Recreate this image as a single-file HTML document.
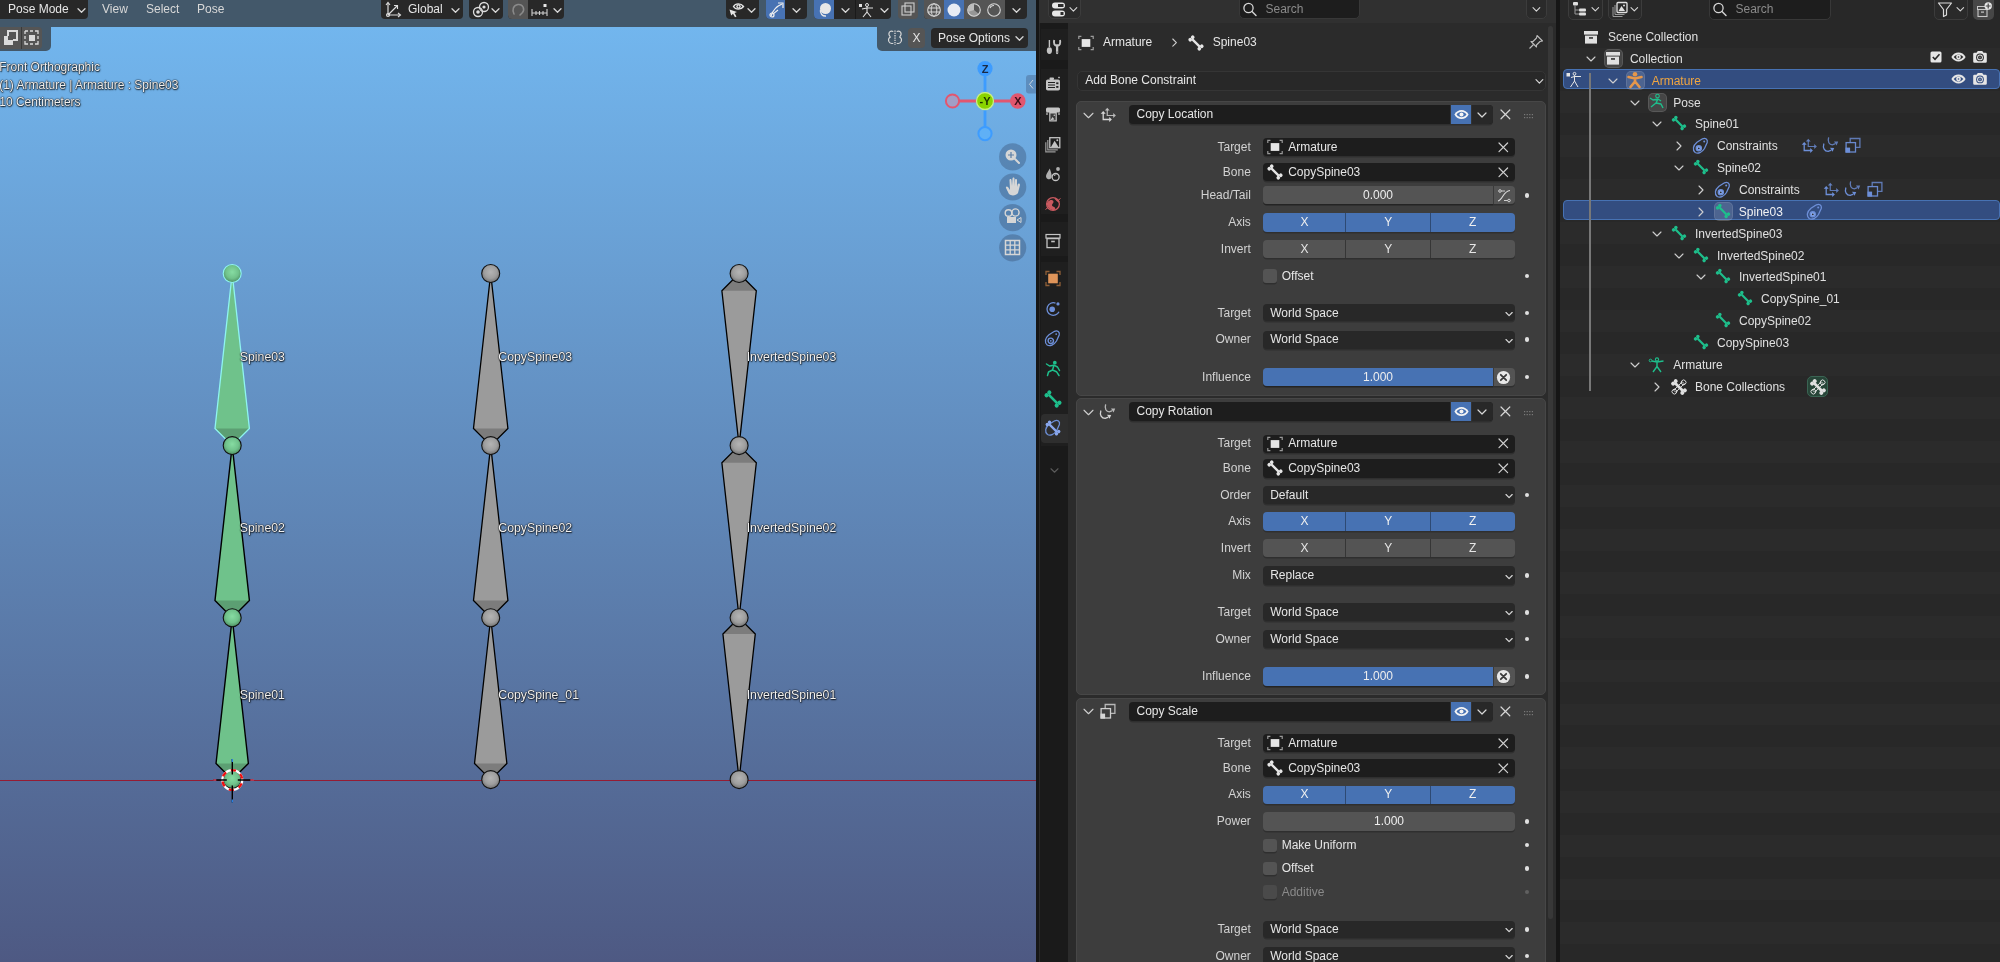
<!DOCTYPE html><html><head><meta charset="utf-8"><style>
html,body{margin:0;padding:0;width:2000px;height:962px;overflow:hidden;background:#161616;font-family:"Liberation Sans", sans-serif;}
div{box-sizing:border-box;}
body>div{will-change:transform;}
</style></head><body>
<div style="position:absolute;left:0;top:0;width:1036px;height:962px;background:linear-gradient(180deg,#72b6ee 27px,#4f5d87 925px,#4e5983 962px);overflow:hidden">
<div style="position:absolute;left:0px;top:0px;width:1036px;height:27px;background:rgba(47,47,47,0.69);border-radius:0px;"></div>
<div style="position:absolute;left:0px;top:27px;width:51px;height:23.8px;background:rgba(47,47,47,0.69);border-radius:0px;border-bottom-right-radius:5px"></div>
<div style="position:absolute;left:877px;top:27px;width:159px;height:23.8px;background:rgba(47,47,47,0.69);border-radius:0px;border-bottom-left-radius:5px"></div>
<div style="position:absolute;left:-5px;top:-5px;width:93px;height:24px;background:#282828;border-radius:4px;"></div>
<div style="position:absolute;left:8px;top:1px;height:16px;line-height:16px;font-size:12px;color:#e6e6e6;white-space:nowrap;">Pose Mode</div>
<svg style="position:absolute;left:76.5px;top:6.5px;overflow:visible" width="9.0" height="7.0" viewBox="0 0 9.0 7.0" ><path d="M1 1.75 L4.5 5.25 L8.0 1.75" fill="none" stroke="#d6d6d6" stroke-width="1.3" stroke-linecap="round" stroke-linejoin="round"/></svg>
<div style="position:absolute;left:102px;top:1px;height:16px;line-height:16px;font-size:12px;color:#d8d8d8;white-space:nowrap;">View</div>
<div style="position:absolute;left:146px;top:1px;height:16px;line-height:16px;font-size:12px;color:#d8d8d8;white-space:nowrap;">Select</div>
<div style="position:absolute;left:197px;top:1px;height:16px;line-height:16px;font-size:12px;color:#d8d8d8;white-space:nowrap;">Pose</div>
<div style="position:absolute;left:381px;top:-5px;width:82px;height:24px;background:#282828;border-radius:4px;"></div>
<svg style="position:absolute;left:385px;top:1px;overflow:visible" width="16" height="16" viewBox="0 0 16 16" ><path d="M3 2 V14 H15 M3 14 L12 5" fill="none" stroke="#dcdcdc" stroke-width="1.2"/><path d="M1 4 L3 1.5 L5 4 M13 12 L15.5 14 L13 16 M9 4.5 L12.5 4.5 L12.5 8" fill="none" stroke="#dcdcdc" stroke-width="1.1"/><circle cx="3" cy="14" r="1.5" fill="none" stroke="#dcdcdc" stroke-width="1.1"/></svg>
<div style="position:absolute;left:408px;top:1px;height:16px;line-height:16px;font-size:12px;color:#e6e6e6;white-space:nowrap;">Global</div>
<svg style="position:absolute;left:450.5px;top:6.5px;overflow:visible" width="9.0" height="7.0" viewBox="0 0 9.0 7.0" ><path d="M1 1.75 L4.5 5.25 L8.0 1.75" fill="none" stroke="#d6d6d6" stroke-width="1.3" stroke-linecap="round" stroke-linejoin="round"/></svg>
<div style="position:absolute;left:469px;top:-5px;width:34px;height:24px;background:#282828;border-radius:4px;"></div>
<svg style="position:absolute;left:472px;top:1px;overflow:visible" width="18" height="17" viewBox="0 0 18 17" ><circle cx="6" cy="11" r="4.5" fill="none" stroke="#dcdcdc" stroke-width="1.3"/><circle cx="6" cy="11" r="1.8" fill="#dcdcdc"/><circle cx="12" cy="6" r="4.5" fill="none" stroke="#dcdcdc" stroke-width="1.3"/><circle cx="12" cy="6" r="1.6" fill="#dcdcdc"/></svg>
<svg style="position:absolute;left:490.5px;top:6.5px;overflow:visible" width="9.0" height="7.0" viewBox="0 0 9.0 7.0" ><path d="M1 1.75 L4.5 5.25 L8.0 1.75" fill="none" stroke="#d6d6d6" stroke-width="1.3" stroke-linecap="round" stroke-linejoin="round"/></svg>
<div style="position:absolute;left:508px;top:-5px;width:56px;height:24px;background:#282828;border-radius:4px;"></div>
<div style="position:absolute;left:508px;top:-5px;width:20px;height:24px;background:#555555;border-radius:0px;border-top-left-radius:4px;border-bottom-left-radius:4px"></div>
<svg style="position:absolute;left:511px;top:2px;overflow:visible" width="15" height="15" viewBox="0 0 15 15" ><path d="M3 12 C1 8 2 3 7 2.5 C12 2 14 7 11.5 10.5 L9 13" fill="none" stroke="#8a8a8a" stroke-width="1.6" stroke-linecap="round"/></svg>
<svg style="position:absolute;left:531px;top:3px;overflow:visible" width="18" height="14" viewBox="0 0 18 14" ><path d="M1 6 V13 M16 6 V13 M1 10 H16 M5 8 V12 M8.5 8 V12 M12 8 V12" stroke="#cfcfcf" stroke-width="1.1"/><rect x="12.5" y="1" width="3" height="3" fill="#e6e6e6"/></svg>
<svg style="position:absolute;left:552.5px;top:6.5px;overflow:visible" width="9.0" height="7.0" viewBox="0 0 9.0 7.0" ><path d="M1 1.75 L4.5 5.25 L8.0 1.75" fill="none" stroke="#d6d6d6" stroke-width="1.3" stroke-linecap="round" stroke-linejoin="round"/></svg>
<div style="position:absolute;left:726px;top:-5px;width:33px;height:24px;background:#282828;border-radius:4px;"></div>
<svg style="position:absolute;left:728px;top:1px;overflow:visible" width="18" height="17" viewBox="0 0 18 17" ><path d="M1.5 8.5 L9 11 L6.5 12 L8.5 15.5 L7 16.3 L5 12.8 L3.2 14.5 Z" fill="#e6e6e6"/><path d="M5.5 5.5 C7.5 2 13 2 15.5 5.5 C13 9 7.5 9 5.5 5.5 Z" fill="none" stroke="#e6e6e6" stroke-width="1.4"/><circle cx="10.5" cy="5.5" r="2.2" fill="#e6e6e6"/><circle cx="10.5" cy="5.5" r="0.9" fill="#282828"/></svg>
<svg style="position:absolute;left:746.5px;top:6.5px;overflow:visible" width="9.0" height="7.0" viewBox="0 0 9.0 7.0" ><path d="M1 1.75 L4.5 5.25 L8.0 1.75" fill="none" stroke="#d6d6d6" stroke-width="1.3" stroke-linecap="round" stroke-linejoin="round"/></svg>
<div style="position:absolute;left:766px;top:-5px;width:41px;height:24px;background:#282828;border-radius:4px;"></div>
<div style="position:absolute;left:766px;top:-5px;width:19px;height:24px;background:#4772b3;border-radius:0px;border-top-left-radius:4px;border-bottom-left-radius:4px"></div>
<svg style="position:absolute;left:768px;top:1px;overflow:visible" width="16" height="17" viewBox="0 0 16 17" ><path d="M3 15 C5 9 9 5 14 3" fill="none" stroke="#f0f0f0" stroke-width="1.2"/><path d="M10 2 H15 V7" fill="none" stroke="#f0f0f0" stroke-width="1.2"/><circle cx="4" cy="14" r="2" fill="none" stroke="#f0f0f0" stroke-width="1.2"/><path d="M5 13 L10 9" stroke="#f0f0f0" stroke-width="1.1"/></svg>
<svg style="position:absolute;left:791.5px;top:6.5px;overflow:visible" width="9.0" height="7.0" viewBox="0 0 9.0 7.0" ><path d="M1 1.75 L4.5 5.25 L8.0 1.75" fill="none" stroke="#d6d6d6" stroke-width="1.3" stroke-linecap="round" stroke-linejoin="round"/></svg>
<div style="position:absolute;left:814px;top:-5px;width:77px;height:24px;background:#282828;border-radius:4px;"></div>
<div style="position:absolute;left:814px;top:-5px;width:20px;height:24px;background:#4772b3;border-radius:0px;border-top-left-radius:4px;border-bottom-left-radius:4px"></div>
<svg style="position:absolute;left:816px;top:1px;overflow:visible" width="16" height="17" viewBox="0 0 16 17" ><circle cx="9.5" cy="7.5" r="5.5" fill="#e8e8e8"/><path d="M4.5 9 A5 5 0 0 0 10 15" fill="none" stroke="#e8e8e8" stroke-width="1.4"/></svg>
<svg style="position:absolute;left:840.5px;top:6.5px;overflow:visible" width="9.0" height="7.0" viewBox="0 0 9.0 7.0" ><path d="M1 1.75 L4.5 5.25 L8.0 1.75" fill="none" stroke="#d6d6d6" stroke-width="1.3" stroke-linecap="round" stroke-linejoin="round"/></svg>
<div style="position:absolute;left:855px;top:-5px;width:1px;height:24px;background:#1a1a1a;border-radius:0px;"></div>
<svg style="position:absolute;left:858px;top:2px;overflow:visible" width="16" height="16" viewBox="0 0 16 16" ><rect x="1" y="2" width="3" height="3" fill="#e0e0e0"/><circle cx="9" cy="3" r="1.5" fill="none" stroke="#e0e0e0" stroke-width="1"/><path d="M9 4.5 V10 L5 15 M9 10 L13 15 M4 7 L9 6 L15 6" fill="none" stroke="#e0e0e0" stroke-width="1.1"/></svg>
<svg style="position:absolute;left:879.5px;top:6.5px;overflow:visible" width="9.0" height="7.0" viewBox="0 0 9.0 7.0" ><path d="M1 1.75 L4.5 5.25 L8.0 1.75" fill="none" stroke="#d6d6d6" stroke-width="1.3" stroke-linecap="round" stroke-linejoin="round"/></svg>
<div style="position:absolute;left:898px;top:-5px;width:20px;height:24px;background:#555555;border-radius:4px;"></div>
<svg style="position:absolute;left:900px;top:2px;overflow:visible" width="16" height="15" viewBox="0 0 16 15" ><rect x="2" y="4" width="9" height="9" fill="none" stroke="#cfcfcf" stroke-width="1.1"/><rect x="5" y="1" width="9" height="9" fill="none" stroke="#cfcfcf" stroke-width="1.1"/></svg>
<div style="position:absolute;left:924px;top:-5px;width:103px;height:24px;background:#282828;border-radius:4px;"></div>
<div style="position:absolute;left:924px;top:-5px;width:20px;height:24px;background:#555555;border-radius:0px;border-top-left-radius:4px;border-bottom-left-radius:4px"></div>
<div style="position:absolute;left:944px;top:-5px;width:20px;height:24px;background:#4772b3;border-radius:0px;"></div>
<div style="position:absolute;left:964px;top:-5px;width:20px;height:24px;background:#555555;border-radius:0px;"></div>
<div style="position:absolute;left:984px;top:-5px;width:21px;height:24px;background:#555555;border-radius:0px;"></div>
<svg style="position:absolute;left:926px;top:2px;overflow:visible" width="16" height="16" viewBox="0 0 16 16" ><circle cx="8" cy="8" r="6.3" fill="none" stroke="#d8d8d8" stroke-width="1.1"/><ellipse cx="8" cy="8" rx="2.8" ry="6.3" fill="none" stroke="#d8d8d8" stroke-width="1"/><path d="M1.7 6 H14.3 M1.7 10 H14.3" stroke="#d8d8d8" stroke-width="1"/></svg>
<svg style="position:absolute;left:946px;top:2px;overflow:visible" width="16" height="16" viewBox="0 0 16 16" ><circle cx="8" cy="8" r="6.5" fill="#e8ecf4"/></svg>
<svg style="position:absolute;left:966px;top:2px;overflow:visible" width="16" height="16" viewBox="0 0 16 16" ><circle cx="8" cy="8" r="6.3" fill="none" stroke="#d8d8d8" stroke-width="1.1"/><path d="M8 1.7 V8 L13 12 A6.3 6.3 0 0 1 2 10 Z" fill="#d8d8d8" opacity="0.5"/><path d="M8 1.7 A6.3 6.3 0 0 0 2 10 L8 8 Z" fill="#bdbdbd"/></svg>
<svg style="position:absolute;left:986px;top:2px;overflow:visible" width="16" height="16" viewBox="0 0 16 16" ><circle cx="8" cy="8" r="6.3" fill="none" stroke="#d8d8d8" stroke-width="1.1"/><path d="M4 6 A4 4 0 0 1 8 3.5" fill="none" stroke="#d8d8d8" stroke-width="1.1"/></svg>
<svg style="position:absolute;left:1011.5px;top:6.5px;overflow:visible" width="9.0" height="7.0" viewBox="0 0 9.0 7.0" ><path d="M1 1.75 L4.5 5.25 L8.0 1.75" fill="none" stroke="#d6d6d6" stroke-width="1.3" stroke-linecap="round" stroke-linejoin="round"/></svg>
<div style="position:absolute;left:-4px;top:27px;width:46px;height:22px;background:#555555;border-radius:4px;"></div>
<div style="position:absolute;left:21px;top:27px;width:1px;height:22px;background:#3a3a3a;border-radius:0px;"></div>
<svg style="position:absolute;left:2px;top:30px;overflow:visible" width="17" height="16" viewBox="0 0 17 16" ><rect x="2" y="6" width="9" height="9" fill="#dadada"/><rect x="6" y="1" width="9" height="9" fill="none" stroke="#dadada" stroke-width="2"/><rect x="6" y="6" width="5" height="4" fill="#555"/></svg>
<svg style="position:absolute;left:24px;top:30px;overflow:visible" width="16" height="16" viewBox="0 0 16 16" ><rect x="5" y="5" width="6" height="6" fill="#dadada"/><path d="M1 1 H4 M6 1 H9 M11 1 H14 V4 M14 6 V9 M14 11 V14 H11 M9 14 H6 M4 14 H1 V11 M1 9 V6 M1 4 V1" stroke="#dadada" stroke-width="1.3" fill="none"/></svg>
<svg style="position:absolute;left:886px;top:29px;overflow:visible" width="18" height="18" viewBox="0 0 18 18" ><path d="M7.3 2.5 C3.2 1.2 1.5 4.5 4.3 8 C1 10 2.5 15.5 7.3 14.2" fill="none" stroke="#d8d8d8" stroke-width="1.1"/><path d="M10.7 2.5 C14.8 1.2 16.5 4.5 13.7 8 C17 10 15.5 15.5 10.7 14.2" fill="none" stroke="#d8d8d8" stroke-width="1.1"/><path d="M9 1.5 V16" stroke="#d8d8d8" stroke-width="1.3" stroke-dasharray="1.3 1"/></svg>
<div style="position:absolute;left:908px;top:28px;width:17px;height:20px;background:#555555;border-radius:4px;"></div>
<div style="position:absolute;left:716.5px;width:400px;text-align:center;top:30px;height:16px;line-height:16px;font-size:12px;color:#e6e6e6;white-space:nowrap;">X</div>
<div style="position:absolute;left:931px;top:28px;width:97px;height:20px;background:#282828;border-radius:4px;"></div>
<div style="position:absolute;left:938px;top:29.5px;height:16px;line-height:16px;font-size:12px;color:#e6e6e6;white-space:nowrap;">Pose Options</div>
<svg style="position:absolute;left:1014.5px;top:34.5px;overflow:visible" width="9.0" height="7.0" viewBox="0 0 9.0 7.0" ><path d="M1 1.75 L4.5 5.25 L8.0 1.75" fill="none" stroke="#d6d6d6" stroke-width="1.3" stroke-linecap="round" stroke-linejoin="round"/></svg>
<div style="position:absolute;left:-0.8px;top:59px;height:16px;line-height:16px;font-size:12px;color:#f0f0f0;white-space:nowrap;text-shadow:0 0 1.5px rgba(0,0,0,.9),0 0 1px #000,0.5px 1px 1.5px rgba(0,0,0,.8)">Front Orthographic</div>
<div style="position:absolute;left:-0.8px;top:77px;height:16px;line-height:16px;font-size:12px;color:#f0f0f0;white-space:nowrap;text-shadow:0 0 1.5px rgba(0,0,0,.9),0 0 1px #000,0.5px 1px 1.5px rgba(0,0,0,.8)">(1) Armature | Armature : Spine03</div>
<div style="position:absolute;left:-0.8px;top:94.3px;height:16px;line-height:16px;font-size:12px;color:#f0f0f0;white-space:nowrap;text-shadow:0 0 1.5px rgba(0,0,0,.9),0 0 1px #000,0.5px 1px 1.5px rgba(0,0,0,.8)">10 Centimeters</div>
<svg style="position:absolute;left:0;top:0" width="1036" height="962"><line x1="985" y1="101" x2="985" y2="68.6" stroke="#3d9cff" stroke-width="2.8"/><line x1="985" y1="101" x2="985" y2="133.6" stroke="#3d9cff" stroke-width="2.8"/><line x1="985" y1="101" x2="1017.8" y2="101" stroke="#e2566f" stroke-width="2.8"/><line x1="985" y1="101" x2="952.5" y2="101" stroke="#e2566f" stroke-width="2.8"/><circle cx="985" cy="133.6" r="6.6" fill="#5fb0f6" stroke="#3d9cff" stroke-width="2"/><circle cx="952.5" cy="101" r="6.6" fill="#a19ec6" stroke="#e2566f" stroke-width="2"/><circle cx="985" cy="68.6" r="7.6" fill="#3d9cff"/><circle cx="1017.8" cy="101" r="7.8" fill="#e2566f"/><circle cx="985" cy="101" r="8.5" fill="#8ad400" stroke="#c9ef86" stroke-width="1.3"/><text x="985" y="72.8" font-size="11" font-family="Liberation Sans" font-weight="bold" fill="#1a2a44" text-anchor="middle">Z</text><text x="1017.8" y="105.2" font-size="11" font-family="Liberation Sans" font-weight="bold" fill="#3a0d18" text-anchor="middle">X</text><text x="985" y="105.2" font-size="11" font-family="Liberation Sans" font-weight="bold" fill="#1d3300" text-anchor="middle">-Y</text><circle cx="1012.7" cy="156.9" r="13.6" fill="rgba(50,70,100,0.35)"/><circle cx="1012.7" cy="187" r="13.6" fill="rgba(50,70,100,0.35)"/><circle cx="1012.7" cy="217.7" r="13.6" fill="rgba(50,70,100,0.35)"/><circle cx="1012.7" cy="247.8" r="13.6" fill="rgba(50,70,100,0.35)"/><circle cx="1011" cy="155" r="5.5" fill="#d6d6d6"/><path d="M1011 152 V158 M1008 155 H1014" stroke="#5a7ea6" stroke-width="1.2"/><path d="M1015 159 L1019 163" stroke="#d6d6d6" stroke-width="2" stroke-linecap="round"/><path d="M1006 188 L1009 194 C1011 196 1016 196 1018 193 L1020 185 C1020 183 1018 183 1017.5 185 L1017 187 L1017 180 C1017 178.5 1015 178.5 1015 180 L1014.5 186 L1014.5 178.5 C1014.5 177 1012.5 177 1012.5 178.5 L1012 186 L1011.5 180 C1011.5 178.5 1009.5 178.5 1009.5 180 L1010 190 L1008 187 C1007 186 1005.5 186.5 1006 188 Z" fill="#d6d6d6"/><circle cx="1008.5" cy="213" r="3.3" fill="none" stroke="#d6d6d6" stroke-width="1.4"/><circle cx="1015.5" cy="212.5" r="3.6" fill="none" stroke="#d6d6d6" stroke-width="1.4"/><rect x="1007" y="217" width="9" height="6" fill="#d6d6d6"/><path d="M1017 220 L1021 217.5 V222.5 Z" fill="none" stroke="#d6d6d6" stroke-width="1"/><rect x="1005.5" y="240.5" width="14" height="14" fill="none" stroke="#d6d6d6" stroke-width="1.5"/><path d="M1010.2 240.5 V254.5 M1014.8 240.5 V254.5 M1005.5 245.2 H1019.5 M1005.5 249.8 H1019.5" stroke="#d6d6d6" stroke-width="1.3"/><rect x="1026" y="75" width="14" height="18.5" rx="3" fill="rgba(70,100,140,0.45)"/><path d="M1033 80 L1029.5 84.3 L1033 88.5" fill="none" stroke="#c8d4e0" stroke-width="1"/></svg>
<div style="position:absolute;left:0px;top:780px;width:1036px;height:1px;background:#951c33;border-radius:0px;"></div>
<svg style="position:absolute;left:0;top:0" width="1036" height="962"><defs><radialGradient id="jg" cx="50%" cy="42%" r="58%"><stop offset="0" stop-color="#86dca2"/><stop offset="0.6" stop-color="#70c28b"/><stop offset="1" stop-color="#4d8f63"/></radialGradient><radialGradient id="jy" cx="50%" cy="42%" r="58%"><stop offset="0" stop-color="#b4b4b4"/><stop offset="0.6" stop-color="#9e9e9e"/><stop offset="1" stop-color="#707070"/></radialGradient></defs><path d="M232.2 779.6 L216.01999999999998 763.4200000000001 L232.2 617.8 L248.38 763.4200000000001 Z" fill="#6fc28b"/><path d="M232.2 779.6 L216.01999999999998 763.4200000000001 L248.38 763.4200000000001 Z" fill="#5c9f73"/><path d="M232.2 779.6 L216.01999999999998 763.4200000000001 L232.2 617.8 L248.38 763.4200000000001 Z" fill="none" stroke="#000" stroke-width="1.4" stroke-linejoin="miter"/><path d="M232.2 617.8 L214.98 600.5799999999999 L232.2 445.6 L249.42 600.5799999999999 Z" fill="#6fc28b"/><path d="M232.2 617.8 L214.98 600.5799999999999 L249.42 600.5799999999999 Z" fill="#5c9f73"/><path d="M232.2 617.8 L214.98 600.5799999999999 L232.2 445.6 L249.42 600.5799999999999 Z" fill="none" stroke="#000" stroke-width="1.4" stroke-linejoin="miter"/><path d="M232.2 445.6 L214.98999999999998 428.39000000000004 L232.2 273.5 L249.41 428.39000000000004 Z" fill="#6fc28b"/><path d="M232.2 445.6 L214.98999999999998 428.39000000000004 L249.41 428.39000000000004 Z" fill="#5c9f73"/><path d="M232.2 445.6 L214.98999999999998 428.39000000000004 L232.2 273.5 L249.41 428.39000000000004 Z" fill="none" stroke="#8ff4f0" stroke-width="1.3" stroke-linejoin="miter"/><circle cx="232.2" cy="779.6" r="9" fill="url(#jg)" stroke="#111" stroke-width="1.1"/><circle cx="232.2" cy="617.8" r="9" fill="url(#jg)" stroke="#111" stroke-width="1.1"/><circle cx="232.2" cy="445.6" r="9" fill="url(#jg)" stroke="#111" stroke-width="1.1"/><circle cx="232.2" cy="273.5" r="9" fill="url(#jg)" stroke="#8ff4f0" stroke-width="1.1"/><path d="M490.7 779.6 L474.52 763.4200000000001 L490.7 617.8 L506.88 763.4200000000001 Z" fill="#9b9b9b"/><path d="M490.7 779.6 L474.52 763.4200000000001 L506.88 763.4200000000001 Z" fill="#7c7c7c"/><path d="M490.7 779.6 L474.52 763.4200000000001 L490.7 617.8 L506.88 763.4200000000001 Z" fill="none" stroke="#000" stroke-width="1.3" stroke-linejoin="miter"/><path d="M490.7 617.8 L473.48 600.5799999999999 L490.7 445.6 L507.91999999999996 600.5799999999999 Z" fill="#9b9b9b"/><path d="M490.7 617.8 L473.48 600.5799999999999 L507.91999999999996 600.5799999999999 Z" fill="#7c7c7c"/><path d="M490.7 617.8 L473.48 600.5799999999999 L490.7 445.6 L507.91999999999996 600.5799999999999 Z" fill="none" stroke="#000" stroke-width="1.3" stroke-linejoin="miter"/><path d="M490.7 445.6 L473.49 428.39000000000004 L490.7 273.5 L507.90999999999997 428.39000000000004 Z" fill="#9b9b9b"/><path d="M490.7 445.6 L473.49 428.39000000000004 L507.90999999999997 428.39000000000004 Z" fill="#7c7c7c"/><path d="M490.7 445.6 L473.49 428.39000000000004 L490.7 273.5 L507.90999999999997 428.39000000000004 Z" fill="none" stroke="#000" stroke-width="1.3" stroke-linejoin="miter"/><circle cx="490.7" cy="273.5" r="9" fill="url(#jy)" stroke="#111" stroke-width="1.1"/><circle cx="490.7" cy="445.6" r="9" fill="url(#jy)" stroke="#111" stroke-width="1.1"/><circle cx="490.7" cy="617.8" r="9" fill="url(#jy)" stroke="#111" stroke-width="1.1"/><circle cx="490.7" cy="779.6" r="9" fill="url(#jy)" stroke="#111" stroke-width="1.1"/><path d="M739.1 273.5 L721.89 290.71 L739.1 445.6 L756.3100000000001 290.71 Z" fill="#9b9b9b"/><path d="M739.1 273.5 L721.89 290.71 L756.3100000000001 290.71 Z" fill="#7c7c7c"/><path d="M739.1 273.5 L721.89 290.71 L739.1 445.6 L756.3100000000001 290.71 Z" fill="none" stroke="#000" stroke-width="1.3" stroke-linejoin="miter"/><path d="M739.1 445.6 L721.88 462.82 L739.1 617.8 L756.32 462.82 Z" fill="#9b9b9b"/><path d="M739.1 445.6 L721.88 462.82 L756.32 462.82 Z" fill="#7c7c7c"/><path d="M739.1 445.6 L721.88 462.82 L739.1 617.8 L756.32 462.82 Z" fill="none" stroke="#000" stroke-width="1.3" stroke-linejoin="miter"/><path d="M739.1 617.8 L722.9200000000001 633.98 L739.1 779.6 L755.28 633.98 Z" fill="#9b9b9b"/><path d="M739.1 617.8 L722.9200000000001 633.98 L755.28 633.98 Z" fill="#7c7c7c"/><path d="M739.1 617.8 L722.9200000000001 633.98 L739.1 779.6 L755.28 633.98 Z" fill="none" stroke="#000" stroke-width="1.3" stroke-linejoin="miter"/><circle cx="739.1" cy="273.5" r="9" fill="url(#jy)" stroke="#111" stroke-width="1.1"/><circle cx="739.1" cy="445.6" r="9" fill="url(#jy)" stroke="#111" stroke-width="1.1"/><circle cx="739.1" cy="617.8" r="9" fill="url(#jy)" stroke="#111" stroke-width="1.1"/><circle cx="739.1" cy="779.6" r="9" fill="url(#jy)" stroke="#111" stroke-width="1.1"/><circle cx="232.3" cy="780" r="9.9" fill="none" stroke="#fff" stroke-width="2.3"/><circle cx="232.3" cy="780" r="9.9" fill="none" stroke="#f01010" stroke-width="2.3" stroke-dasharray="5.18 5.18" transform="rotate(20 232.3 780)"/><path d="M232.3 759 V774.5 M232.3 785.5 V802.5 M213.3 780 H226.8 M237.8 780 H253.3" stroke="#000" stroke-width="1.4"/><path d="M232.3 759 V762 M232.3 799.5 V802.5" stroke="#2a80e0" stroke-width="1.4"/><path d="M213.3 780 H216.3 M250.3 780 H253.8" stroke="#e04a6a" stroke-width="1.6"/></svg>
<div style="position:absolute;left:239.79999999999998px;top:349.2px;height:16px;line-height:16px;font-size:12.3px;color:#f2f2f2;white-space:nowrap;text-shadow:0 0 1.5px rgba(0,0,0,.9),0 0 1px #000,0.5px 1px 1.5px rgba(0,0,0,.8)">Spine03</div>
<div style="position:absolute;left:239.79999999999998px;top:520.3px;height:16px;line-height:16px;font-size:12.3px;color:#f2f2f2;white-space:nowrap;text-shadow:0 0 1.5px rgba(0,0,0,.9),0 0 1px #000,0.5px 1px 1.5px rgba(0,0,0,.8)">Spine02</div>
<div style="position:absolute;left:239.79999999999998px;top:687.0999999999999px;height:16px;line-height:16px;font-size:12.3px;color:#f2f2f2;white-space:nowrap;text-shadow:0 0 1.5px rgba(0,0,0,.9),0 0 1px #000,0.5px 1px 1.5px rgba(0,0,0,.8)">Spine01</div>
<div style="position:absolute;left:498.3px;top:349.2px;height:16px;line-height:16px;font-size:12.3px;color:#f2f2f2;white-space:nowrap;text-shadow:0 0 1.5px rgba(0,0,0,.9),0 0 1px #000,0.5px 1px 1.5px rgba(0,0,0,.8)">CopySpine03</div>
<div style="position:absolute;left:498.3px;top:520.3px;height:16px;line-height:16px;font-size:12.3px;color:#f2f2f2;white-space:nowrap;text-shadow:0 0 1.5px rgba(0,0,0,.9),0 0 1px #000,0.5px 1px 1.5px rgba(0,0,0,.8)">CopySpine02</div>
<div style="position:absolute;left:498.3px;top:687.0999999999999px;height:16px;line-height:16px;font-size:12.3px;color:#f2f2f2;white-space:nowrap;text-shadow:0 0 1.5px rgba(0,0,0,.9),0 0 1px #000,0.5px 1px 1.5px rgba(0,0,0,.8)">CopySpine_01</div>
<div style="position:absolute;left:746.7px;top:349.2px;height:16px;line-height:16px;font-size:12.3px;color:#f2f2f2;white-space:nowrap;text-shadow:0 0 1.5px rgba(0,0,0,.9),0 0 1px #000,0.5px 1px 1.5px rgba(0,0,0,.8)">InvertedSpine03</div>
<div style="position:absolute;left:746.7px;top:520.3px;height:16px;line-height:16px;font-size:12.3px;color:#f2f2f2;white-space:nowrap;text-shadow:0 0 1.5px rgba(0,0,0,.9),0 0 1px #000,0.5px 1px 1.5px rgba(0,0,0,.8)">InvertedSpine02</div>
<div style="position:absolute;left:746.7px;top:687.0999999999999px;height:16px;line-height:16px;font-size:12.3px;color:#f2f2f2;white-space:nowrap;text-shadow:0 0 1.5px rgba(0,0,0,.9),0 0 1px #000,0.5px 1px 1.5px rgba(0,0,0,.8)">InvertedSpine01</div>
</div>
<div style="position:absolute;left:1039px;top:0;width:517px;height:962px;overflow:hidden">
<div style="position:absolute;left:-1039px;top:0;width:2000px;height:962px">
<div style="position:absolute;left:1039px;top:0px;width:516.7px;height:962px;background:#2b2b2b;border-radius:0px;"></div>
<div style="position:absolute;left:1039px;top:0px;width:516.7px;height:23px;background:#303030;border-radius:0px;"></div>
<div style="position:absolute;left:1048px;top:-5px;width:33px;height:24px;background:#2a2a2a;border-radius:5px;border:1px solid #3c3c3c"></div>
<svg style="position:absolute;left:1051px;top:1px;overflow:visible" width="18" height="17" viewBox="0 0 18 17" ><rect x="1" y="1.5" width="13" height="6" rx="3" fill="#e6e6e6"/><rect x="7" y="3" width="5.5" height="3" fill="#2a2a2a"/><rect x="1" y="9.5" width="13" height="6" rx="3" fill="#e6e6e6"/><rect x="9.5" y="11" width="3" height="3" fill="#2a2a2a"/></svg>
<svg style="position:absolute;left:1068.6px;top:6.1px;overflow:visible" width="8.8" height="6.8" viewBox="0 0 8.8 6.8" ><path d="M1 1.7 L4.4 5.1 L7.8 1.7" fill="none" stroke="#d6d6d6" stroke-width="1.1" stroke-linecap="round" stroke-linejoin="round"/></svg>
<div style="position:absolute;left:1238.5px;top:-5px;width:121.5px;height:24px;background:#1d1d1d;border-radius:5px;border:1px solid #383838"></div>
<svg style="position:absolute;left:1242px;top:1px;overflow:visible" width="16" height="17" viewBox="0 0 16 17" ><circle cx="6.5" cy="7" r="4.6" fill="none" stroke="#d6d6d6" stroke-width="1.3"/><path d="M10 10.5 L14 14.5" stroke="#d6d6d6" stroke-width="1.4" stroke-linecap="round"/></svg>
<div style="position:absolute;left:1265.5px;top:1px;height:16px;line-height:16px;font-size:12px;color:#8a8a8a;white-space:nowrap;">Search</div>
<div style="position:absolute;left:1526px;top:-5px;width:21px;height:24px;background:#2a2a2a;border-radius:5px;border:1px solid #3c3c3c"></div>
<svg style="position:absolute;left:1532.1px;top:6.1px;overflow:visible" width="8.8" height="6.8" viewBox="0 0 8.8 6.8" ><path d="M1 1.7 L4.4 5.1 L7.8 1.7" fill="none" stroke="#d6d6d6" stroke-width="1.1" stroke-linecap="round" stroke-linejoin="round"/></svg>
<div style="position:absolute;left:1040px;top:23px;width:28px;height:939px;background:#1a1a1a;border-radius:0px;"></div>
<div style="position:absolute;left:1041px;top:29px;width:27px;height:31px;background:#1f1f1f;border-radius:0px;"></div>
<div style="position:absolute;left:1041px;top:68.5px;width:27px;height:145.5px;background:#1f1f1f;border-radius:0px;"></div>
<div style="position:absolute;left:1041px;top:222px;width:27px;height:34px;background:#1f1f1f;border-radius:0px;"></div>
<div style="position:absolute;left:1041px;top:262px;width:27px;height:184px;background:#1f1f1f;border-radius:0px;"></div>
<div style="position:absolute;left:1041px;top:414px;width:27px;height:29px;background:#2e2e2e;border-radius:4px;border-top-right-radius:0;border-bottom-right-radius:0"></div>
<svg style="position:absolute;left:0;top:0;overflow:visible" width="2000" height="962"><g transform="translate(1053,47)"><path d="M-3.6 -7 V0" stroke="#c4c4c4" stroke-width="1.4"/><ellipse cx="-3.6" cy="3.6" rx="2.6" ry="3.4" fill="#c4c4c4"/><path d="M4.1 -1.5 V6" stroke="#c4c4c4" stroke-width="2.3" stroke-linecap="round"/><path d="M1.2 -7 C0.3 -3.5 1.6 -1.2 4.1 -1.2 C6.6 -1.2 7.9 -3.5 7 -7" fill="none" stroke="#c4c4c4" stroke-width="1.9"/><circle cx="4.1" cy="5" r="0.6" fill="#1f1f1f"/></g><g transform="translate(1053,84)"><rect x="-7" y="-4.5" width="14" height="11" rx="1.8" fill="#c4c4c4"/><rect x="-3.5" y="-6.6" width="4.5" height="2.5" rx="0.8" fill="#c4c4c4"/><rect x="5.2" y="-7.2" width="1.6" height="1.4" fill="#c4c4c4"/><path d="M-5 -1.5 H2 M-5 1 H2 M-5 3.5 H2" stroke="#1f1f1f" stroke-width="1"/><rect x="3.2" y="-1.6" width="2.2" height="1.8" fill="#1f1f1f"/><rect x="3.2" y="2" width="2.2" height="1.8" fill="#1f1f1f"/></g><g transform="translate(1053,114.5)"><rect x="-7" y="-7" width="14" height="5" rx="1.5" fill="#c4c4c4"/><path d="M-6 -2 V0.5 M6 -2 V0.5" stroke="#c4c4c4" stroke-width="1.2"/><rect x="-3.8" y="-2.5" width="7.6" height="9.5" fill="#c4c4c4"/><rect x="-2.6" y="-1" width="5.2" height="6.8" fill="#3a3a3a"/><path d="M-2.6 5.8 L-0.5 2.5 L1.5 5 Z" fill="#c4c4c4"/><circle cx="1.3" cy="0.8" r="0.8" fill="#c4c4c4"/></g><g transform="translate(1053,145)"><rect x="-3.2" y="-7.3" width="10" height="10" fill="none" stroke="#c4c4c4" stroke-width="1.3"/><path d="M-2 2 L1.6 -4.2 L5.5 2 Z" fill="#c4c4c4"/><circle cx="4.3" cy="-4.8" r="1" fill="#c4c4c4"/><path d="M-5.2 -5 V4.8 H4.8 M-7.2 -2.8 V6.8 H2.6" fill="none" stroke="#9a9a9a" stroke-width="1.2"/></g><g transform="translate(1053,174)"><path d="M-3.2 -5.5 C-5.5 -1.5 -7.5 1 -6.8 3.2 C-6 5.5 -3 5.8 -1.8 4.2 C-1 2.8 -1 1 -3.2 -5.5 Z" fill="#b0b0b0"/><circle cx="2.6" cy="3" r="3.5" fill="none" stroke="#c4c4c4" stroke-width="1.3"/><path d="M1.2 2 A1.6 1.6 0 0 1 2.8 0.8" fill="none" stroke="#c4c4c4" stroke-width="0.8"/><circle cx="5" cy="-5" r="1.9" fill="#b0b0b0"/></g><g transform="translate(1053,204)"><circle cx="0" cy="0" r="6.4" fill="none" stroke="#c8595f" stroke-width="1.3"/><path d="M-5 -2.5 C-3 -4.5 0 -4.5 0.5 -2.5 C1 -1 -1.5 0 -1 1.5 C-0.5 3 1.8 2.5 2.2 4 C2.5 5 1.5 6 1 6.3 C-3 6 -6 3 -6.3 -0.5 Z" fill="#c8595f"/><path d="M2 -5.8 C3.5 -4 4.5 -3 6.2 -2" fill="none" stroke="#c8595f" stroke-width="1.5"/><path d="M-7.5 5.5 L-5 3.5 M5 -3.5 L7.5 -5.5" stroke="#c8595f" stroke-width="1"/></g><g transform="translate(1053,241)"><rect x="-7" y="-6.5" width="14" height="3.6" fill="none" stroke="#c4c4c4" stroke-width="1.2"/><rect x="-6" y="-2.4" width="12" height="9" fill="none" stroke="#c4c4c4" stroke-width="1.3"/><rect x="-1.8" y="-0.3" width="3.6" height="1.6" fill="#c4c4c4"/></g><g transform="translate(1053,278.5)"><rect x="-4.8" y="-4.8" width="9.6" height="9.6" fill="#e0955a"/><path d="M-7 -3.5 V-7 H-3.5 M3.5 -7 H7 V-3.5 M7 3.5 V7 H3.5 M-3.5 7 H-7 V3.5" fill="none" stroke="#8e5e36" stroke-width="1.3"/></g><g transform="translate(1053,308.5)"><circle cx="-0.8" cy="0.8" r="2.8" fill="#6d8fd8"/><path d="M2.5 -5.4 A6.3 6.3 0 1 0 6 3.2" fill="none" stroke="#6d8fd8" stroke-width="1.3"/><circle cx="5" cy="-4.6" r="1.6" fill="#6d8fd8"/></g><g transform="translate(1053,338.5)"><path d="M-5.8 6.5 C-8.8 4 -8 -0.5 -4 -3.8 L1.5 -7.2 C4.5 -8.5 7 -6.5 6.2 -3.5 L3.5 2.5 C1 6.5 -3 8 -5.8 6.5 Z" fill="none" stroke="#6d8fd8" stroke-width="1.3"/><circle cx="-2.2" cy="2.3" r="2.7" fill="none" stroke="#6d8fd8" stroke-width="1.4"/><circle cx="-2.2" cy="2.3" r="0.9" fill="#6d8fd8"/><circle cx="3.2" cy="-4.4" r="0.9" fill="#6d8fd8"/></g><g transform="translate(1053,368.5)"><circle cx="1.8" cy="-5.8" r="1.9" fill="#1ebf8c"/><path d="M-6.5 -4.5 L-3.5 -2.5 L1 -3.3 L4.5 -1.5 L6.5 2 M1 -3.3 L-0.5 1.5 L-4.5 3.5 L-5.5 7 M-0.5 1.5 L3.5 3.2 L6 7" fill="none" stroke="#1ebf8c" stroke-width="1.5" stroke-linejoin="round" stroke-linecap="round"/></g></svg>
<svg style="position:absolute;left:1043px;top:388.5px;overflow:visible" width="20" height="20" viewBox="-10 -10 20 20"><g transform="scale(1.12) rotate(45)"><rect x="-5.5" y="-1.15" width="11" height="2.3" fill="#1ebf8c"/><circle cx="-6.4" cy="-1.75" r="1.85" fill="#1ebf8c"/><circle cx="-6.4" cy="1.75" r="1.85" fill="#1ebf8c"/><circle cx="6.4" cy="-1.75" r="1.85" fill="#1ebf8c"/><circle cx="6.4" cy="1.75" r="1.85" fill="#1ebf8c"/></g></svg>
<svg style="position:absolute;left:1043px;top:418px;overflow:visible" width="20" height="20" viewBox="0 0 20 20" ><path d="M4.5 16.5 C1.5 14 2.2 9.5 6.2 6.2 L11.7 2.8 C14.7 1.5 17.2 3.5 16.4 6.5 L13.7 12.5 C11.2 16.5 7.2 18 4.5 16.5 Z" fill="none" stroke="#6d8fd8" stroke-width="1.3"/><g transform="translate(10,10) rotate(45)"><rect x="-6" y="-1.2" width="12" height="2.4" fill="#8aa8ef"/><circle cx="-6.5" cy="-1.6" r="1.7" fill="#8aa8ef"/><circle cx="-6.5" cy="1.6" r="1.7" fill="#8aa8ef"/><circle cx="6.5" cy="-1.6" r="1.7" fill="#8aa8ef"/><circle cx="6.5" cy="1.6" r="1.7" fill="#8aa8ef"/></g></svg>
<svg style="position:absolute;left:1049.5px;top:466.5px;overflow:visible" width="9.0" height="7.0" viewBox="0 0 9.0 7.0" ><path d="M1 1.75 L4.5 5.25 L8.0 1.75" fill="none" stroke="#5a5a5a" stroke-width="1.1" stroke-linecap="round" stroke-linejoin="round"/></svg>
<svg style="position:absolute;left:1075.5px;top:32.8px;overflow:visible" width="20" height="20" viewBox="-10 -10 20 20"><rect x="-4.3" y="-3.9" width="8.6" height="7.8" fill="#e6e6e6"/><path d="M-7.2 -3.9999999999999996 L-7.2 -6.6 L-4.6 -6.6 M-7.2 3.9999999999999996 L-7.2 6.6 L-4.6 6.6 M7.2 -3.9999999999999996 L7.2 -6.6 L4.6 -6.6 M7.2 3.9999999999999996 L7.2 6.6 L4.6 6.6 " fill="none" stroke="#cfcfcf" stroke-width="1.2" opacity="0.7"/></svg>
<div style="position:absolute;left:1102.9px;top:33.6px;height:16px;line-height:16px;font-size:12px;color:#e6e6e6;white-space:nowrap;">Armature</div>
<svg style="position:absolute;left:1170.9px;top:37.699999999999996px;overflow:visible" width="7.2" height="9.2" viewBox="0 0 7.2 9.2" ><path d="M1.8 1 L5.4 4.6 L1.8 8.2" fill="none" stroke="#cfcfcf" stroke-width="1.1" stroke-linecap="round" stroke-linejoin="round"/></svg>
<svg style="position:absolute;left:1185.5px;top:33px;overflow:visible" width="20" height="20" viewBox="-10 -10 20 20"><g transform="scale(1.0) rotate(45)"><rect x="-5.5" y="-1.15" width="11" height="2.3" fill="#e6e6e6"/><circle cx="-6.4" cy="-1.75" r="1.85" fill="#e6e6e6"/><circle cx="-6.4" cy="1.75" r="1.85" fill="#e6e6e6"/><circle cx="6.4" cy="-1.75" r="1.85" fill="#e6e6e6"/><circle cx="6.4" cy="1.75" r="1.85" fill="#e6e6e6"/></g></svg>
<div style="position:absolute;left:1212.7px;top:33.6px;height:16px;line-height:16px;font-size:12px;color:#e6e6e6;white-space:nowrap;">Spine03</div>
<svg style="position:absolute;left:1528px;top:34px;overflow:visible" width="16" height="16" viewBox="0 0 16 16" ><path d="M9 1.5 L14.5 7 L12 7.5 L8.5 11 L8.5 13 L3 7.5 L5 7.5 L8.5 4 Z" fill="none" stroke="#bdbdbd" stroke-width="1.1" stroke-linejoin="round"/><path d="M5.5 10.5 L1.5 14.5" stroke="#bdbdbd" stroke-width="1.1"/></svg>
<div style="position:absolute;left:1076.6px;top:70.8px;width:469.9000000000001px;height:20px;background:#282828;border-radius:5px;border:1px solid #353535"></div>
<div style="position:absolute;left:1085.3px;top:72.3px;height:16px;line-height:16px;font-size:12px;color:#e6e6e6;white-space:nowrap;">Add Bone Constraint</div>
<svg style="position:absolute;left:1534.6px;top:77.6px;overflow:visible" width="8.8" height="6.8" viewBox="0 0 8.8 6.8" ><path d="M1 1.7 L4.4 5.1 L7.8 1.7" fill="none" stroke="#d6d6d6" stroke-width="1.2" stroke-linecap="round" stroke-linejoin="round"/></svg>
<div style="position:absolute;left:1548.4px;top:26px;width:4.5px;height:893px;background:#383838;border-radius:3px;"></div>
<div style="position:absolute;left:1076.4px;top:101.2px;width:469.1999999999998px;height:294.40000000000003px;background:#3d3d3d;border-radius:5px;border:1px solid #474747"></div>
<svg style="position:absolute;left:1083.3px;top:110.5px;overflow:visible" width="11.0" height="9.0" viewBox="0 0 11.0 9.0" ><path d="M1 2.25 L5.5 6.75 L10.0 2.25" fill="none" stroke="#cfcfcf" stroke-width="1.1" stroke-linecap="round" stroke-linejoin="round"/></svg>
<svg style="position:absolute;left:1098px;top:104.4px;overflow:visible" width="20" height="20" viewBox="-10 -10 20 20"><path d="M-0.75 -4.5 V1.5 H5.8" fill="none" stroke="#d6d6d6" stroke-width="1.2" opacity="0.8"/><path d="M-3.2 -3.6 L-0.75 -6.3 L1.7 -3.6 Z M5.2 -1 L7.9 1.5 L5.2 4 Z" fill="#d6d6d6" opacity="0.8"/><path d="M-4.8 -1 V5.5 H1.8" fill="none" stroke="#d6d6d6" stroke-width="1.3"/><path d="M-7.3 -0.2 L-4.8 -2.9 L-2.3 -0.2 Z M1.2 3 L3.9 5.5 L1.2 8 Z" fill="#d6d6d6"/></svg>
<div style="position:absolute;left:1128.7px;top:104.7px;width:364.29999999999995px;height:19.0px;background:#1d1d1d;border-radius:4px;box-shadow:0 1.5px 0 rgba(0,0,0,0.22)"></div>
<div style="position:absolute;left:1136.5px;top:105.9px;height:16px;line-height:16px;font-size:12px;color:#e6e6e6;white-space:nowrap;">Copy Location</div>
<div style="position:absolute;left:1450.8px;top:104.7px;width:20.5px;height:19.0px;background:#4772b3;border-radius:0px;"></div>
<svg style="position:absolute;left:1453.5px;top:108.7px;overflow:visible" width="15" height="11" viewBox="0 0 15 11" ><path d="M0.4 5.5 C3.5 -0.6 11.5 -0.6 14.6 5.5 C11.5 11.6 3.5 11.6 0.4 5.5 Z" fill="#f4f4f4"/><path d="M2.5 5.5 C5.1 1.9 9.9 1.9 12.5 5.5 C9.9 9.1 5.1 9.1 2.5 5.5 Z" fill="#4772b3"/><circle cx="7.5" cy="5.5" r="2" fill="#f4f4f4"/></svg>
<div style="position:absolute;left:1471.3px;top:104.7px;width:22px;height:19.0px;background:#282828;border-radius:0px;border-top-right-radius:4px;border-bottom-right-radius:4px"></div>
<div style="position:absolute;left:1449.6px;top:104.7px;width:1.4px;height:19.0px;background:#333;border-radius:0px;"></div>
<div style="position:absolute;left:1470.8px;top:104.7px;width:1.4px;height:19.0px;background:#333;border-radius:0px;"></div>
<svg style="position:absolute;left:1477px;top:110.7px;overflow:visible" width="10" height="8" viewBox="0 0 10 8" ><path d="M1 2.0 L5 6.0 L9 2.0" fill="none" stroke="#d6d6d6" stroke-width="1.2" stroke-linecap="round" stroke-linejoin="round"/></svg>
<svg style="position:absolute;left:1500.6px;top:109.8px;overflow:visible" width="8.8" height="8.8" viewBox="0 0 8.8 8.8" ><path d="M0 0 L8.8 8.8 M8.8 0 L0 8.8" stroke="#d6d6d6" stroke-width="1.2" stroke-linecap="round"/></svg>
<svg style="position:absolute;left:1524px;top:114.2px;overflow:visible" width="12" height="6" viewBox="0 0 12 6" ><rect x="0.0" y="0" width="1.2" height="1.2" fill="#7a7a7a"/><rect x="0.0" y="3" width="1.2" height="1.2" fill="#7a7a7a"/><rect x="2.6" y="0" width="1.2" height="1.2" fill="#7a7a7a"/><rect x="2.6" y="3" width="1.2" height="1.2" fill="#7a7a7a"/><rect x="5.2" y="0" width="1.2" height="1.2" fill="#7a7a7a"/><rect x="5.2" y="3" width="1.2" height="1.2" fill="#7a7a7a"/><rect x="7.800000000000001" y="0" width="1.2" height="1.2" fill="#7a7a7a"/><rect x="7.800000000000001" y="3" width="1.2" height="1.2" fill="#7a7a7a"/></svg>
<div style="position:absolute;right:749.2px;top:138.75px;height:16px;line-height:16px;font-size:12px;color:#d2d2d2;white-space:nowrap;text-align:right;">Target</div>
<div style="position:absolute;left:1263.2px;top:138.3px;width:251.5999999999999px;height:17.5px;background:#1d1d1d;border-radius:4px;box-shadow:0 1.5px 0 rgba(0,0,0,0.22)"></div>
<svg style="position:absolute;left:1264.7px;top:137.05px;overflow:visible" width="20" height="20" viewBox="-10 -10 20 20"><rect x="-4.3" y="-3.9" width="8.6" height="7.8" fill="#e6e6e6"/><path d="M-7.2 -3.9999999999999996 L-7.2 -6.6 L-4.6 -6.6 M-7.2 3.9999999999999996 L-7.2 6.6 L-4.6 6.6 M7.2 -3.9999999999999996 L7.2 -6.6 L4.6 -6.6 M7.2 3.9999999999999996 L7.2 6.6 L4.6 6.6 " fill="none" stroke="#cfcfcf" stroke-width="1.2" opacity="0.7"/></svg>
<div style="position:absolute;left:1288.2px;top:138.75px;height:16px;line-height:16px;font-size:12px;color:#e6e6e6;white-space:nowrap;">Armature</div>
<svg style="position:absolute;left:1498.7px;top:142.75px;overflow:visible" width="8.6" height="8.6" viewBox="0 0 8.6 8.6" ><path d="M0 0 L8.6 8.6 M8.6 0 L0 8.6" stroke="#d0d0d0" stroke-width="1.2" stroke-linecap="round"/></svg>
<div style="position:absolute;right:749.2px;top:163.79999999999998px;height:16px;line-height:16px;font-size:12px;color:#d2d2d2;white-space:nowrap;text-align:right;">Bone</div>
<div style="position:absolute;left:1263.2px;top:163.2px;width:251.5999999999999px;height:17.80000000000001px;background:#1d1d1d;border-radius:4px;box-shadow:0 1.5px 0 rgba(0,0,0,0.22)"></div>
<svg style="position:absolute;left:1264.7px;top:162.1px;overflow:visible" width="20" height="20" viewBox="-10 -10 20 20"><g transform="scale(1.0) rotate(45)"><rect x="-5.5" y="-1.15" width="11" height="2.3" fill="#e6e6e6"/><circle cx="-6.4" cy="-1.75" r="1.85" fill="#e6e6e6"/><circle cx="-6.4" cy="1.75" r="1.85" fill="#e6e6e6"/><circle cx="6.4" cy="-1.75" r="1.85" fill="#e6e6e6"/><circle cx="6.4" cy="1.75" r="1.85" fill="#e6e6e6"/></g></svg>
<div style="position:absolute;left:1288.2px;top:163.79999999999998px;height:16px;line-height:16px;font-size:12px;color:#e6e6e6;white-space:nowrap;">CopySpine03</div>
<svg style="position:absolute;left:1498.7px;top:167.79999999999998px;overflow:visible" width="8.6" height="8.6" viewBox="0 0 8.6 8.6" ><path d="M0 0 L8.6 8.6 M8.6 0 L0 8.6" stroke="#d0d0d0" stroke-width="1.2" stroke-linecap="round"/></svg>
<div style="position:absolute;right:749.2px;top:187.0px;height:16px;line-height:16px;font-size:12px;color:#d2d2d2;white-space:nowrap;text-align:right;">Head/Tail</div>
<div style="position:absolute;left:1263.2px;top:186.2px;width:251.5999999999999px;height:18.200000000000017px;background:#545454;border-radius:4px;box-shadow:0 1.5px 0 rgba(0,0,0,0.22)"></div>
<div style="position:absolute;left:1263.2px;top:186.2px;width:229.5999999999999px;height:18.200000000000017px;background:#545454;border-radius:4px;box-shadow:0 1.5px 0 rgba(0,0,0,0.22);border-top-right-radius:0;border-bottom-right-radius:0"></div>
<div style="position:absolute;left:1492.8px;top:186.2px;width:0.8px;height:18.200000000000017px;background:rgba(0,0,0,0.3);border-radius:0px;"></div>
<div style="position:absolute;left:1178.0px;width:400px;text-align:center;top:187.0px;height:16px;line-height:16px;font-size:12px;color:#eeeeee;white-space:nowrap;">0.000</div>
<svg style="position:absolute;left:1495.8px;top:188.2px;overflow:visible" width="17" height="15" viewBox="0 0 17 15" ><path d="M2 13 C7 12 7 3 14 2.5" fill="none" stroke="#dcdcdc" stroke-width="1.1"/><circle cx="4" cy="3" r="1.3" fill="none" stroke="#dcdcdc" stroke-width="0.9"/><path d="M5.3 3 H9" stroke="#dcdcdc" stroke-width="0.9"/><circle cx="13" cy="12.5" r="1.3" fill="none" stroke="#dcdcdc" stroke-width="0.9"/><path d="M8 12.5 H11.7" stroke="#dcdcdc" stroke-width="0.9"/></svg>
<div style="position:absolute;left:1524.5px;top:193.0px;width:4.6px;height:4.6px;border-radius:50%;background:#e0e0e0"></div>
<div style="position:absolute;right:749.2px;top:214.1px;height:16px;line-height:16px;font-size:12px;color:#d2d2d2;white-space:nowrap;text-align:right;">Axis</div>
<div style="position:absolute;left:1263.2px;top:213px;width:251.5999999999999px;height:18.80000000000001px;background:#4772b3;border-radius:4px;box-shadow:0 1.5px 0 rgba(0,0,0,0.22)"></div>
<div style="position:absolute;left:1345.3px;top:213px;width:1px;height:18.80000000000001px;background:rgba(0,0,0,0.35);border-radius:0px;"></div>
<div style="position:absolute;left:1430.2px;top:213px;width:1px;height:18.80000000000001px;background:rgba(0,0,0,0.35);border-radius:0px;"></div>
<div style="position:absolute;left:1104.5px;width:400px;text-align:center;top:214.1px;height:16px;line-height:16px;font-size:12px;color:#f0f0f0;white-space:nowrap;">X</div>
<div style="position:absolute;left:1188.25px;width:400px;text-align:center;top:214.1px;height:16px;line-height:16px;font-size:12px;color:#f0f0f0;white-space:nowrap;">Y</div>
<div style="position:absolute;left:1272.75px;width:400px;text-align:center;top:214.1px;height:16px;line-height:16px;font-size:12px;color:#f0f0f0;white-space:nowrap;">Z</div>
<div style="position:absolute;right:749.2px;top:240.75px;height:16px;line-height:16px;font-size:12px;color:#d2d2d2;white-space:nowrap;text-align:right;">Invert</div>
<div style="position:absolute;left:1263.2px;top:239.9px;width:251.5999999999999px;height:18.299999999999983px;background:#545454;border-radius:4px;box-shadow:0 1.5px 0 rgba(0,0,0,0.22)"></div>
<div style="position:absolute;left:1345.3px;top:239.9px;width:1px;height:18.299999999999983px;background:rgba(0,0,0,0.35);border-radius:0px;"></div>
<div style="position:absolute;left:1430.2px;top:239.9px;width:1px;height:18.299999999999983px;background:rgba(0,0,0,0.35);border-radius:0px;"></div>
<div style="position:absolute;left:1104.5px;width:400px;text-align:center;top:240.75px;height:16px;line-height:16px;font-size:12px;color:#e6e6e6;white-space:nowrap;">X</div>
<div style="position:absolute;left:1188.25px;width:400px;text-align:center;top:240.75px;height:16px;line-height:16px;font-size:12px;color:#e6e6e6;white-space:nowrap;">Y</div>
<div style="position:absolute;left:1272.75px;width:400px;text-align:center;top:240.75px;height:16px;line-height:16px;font-size:12px;color:#e6e6e6;white-space:nowrap;">Z</div>
<div style="position:absolute;left:1263.2px;top:269.3px;width:13.6px;height:13.599999999999966px;background:#545454;border-radius:3px;box-shadow:0 1.5px 0 rgba(0,0,0,0.22)"></div>
<div style="position:absolute;left:1281.7px;top:267.8px;height:16px;line-height:16px;font-size:12px;color:#e6e6e6;white-space:nowrap;">Offset</div>
<div style="position:absolute;left:1524.5px;top:273.8px;width:4.6px;height:4.6px;border-radius:50%;background:#e0e0e0"></div>
<div style="position:absolute;right:749.2px;top:304.55px;height:16px;line-height:16px;font-size:12px;color:#d2d2d2;white-space:nowrap;text-align:right;">Target</div>
<div style="position:absolute;left:1263.2px;top:304.2px;width:251.5999999999999px;height:17.30000000000001px;background:#282828;border-radius:4px;box-shadow:0 1.5px 0 rgba(0,0,0,0.22)"></div>
<div style="position:absolute;left:1270.2px;top:304.55px;height:16px;line-height:16px;font-size:12px;color:#e6e6e6;white-space:nowrap;">World Space</div>
<svg style="position:absolute;left:1504.7px;top:310.85px;overflow:visible" width="8.2" height="6.2" viewBox="0 0 8.2 6.2" ><path d="M1 1.55 L4.1 4.65 L7.2 1.55" fill="none" stroke="#d6d6d6" stroke-width="1.2" stroke-linecap="round" stroke-linejoin="round"/></svg>
<div style="position:absolute;left:1524.5px;top:310.55px;width:4.6px;height:4.6px;border-radius:50%;background:#e0e0e0"></div>
<div style="position:absolute;right:749.2px;top:331.2px;height:16px;line-height:16px;font-size:12px;color:#d2d2d2;white-space:nowrap;text-align:right;">Owner</div>
<div style="position:absolute;left:1263.2px;top:330.5px;width:251.5999999999999px;height:18.0px;background:#282828;border-radius:4px;box-shadow:0 1.5px 0 rgba(0,0,0,0.22)"></div>
<div style="position:absolute;left:1270.2px;top:331.2px;height:16px;line-height:16px;font-size:12px;color:#e6e6e6;white-space:nowrap;">World Space</div>
<svg style="position:absolute;left:1504.7px;top:337.5px;overflow:visible" width="8.2" height="6.2" viewBox="0 0 8.2 6.2" ><path d="M1 1.55 L4.1 4.65 L7.2 1.55" fill="none" stroke="#d6d6d6" stroke-width="1.2" stroke-linecap="round" stroke-linejoin="round"/></svg>
<div style="position:absolute;left:1524.5px;top:337.2px;width:4.6px;height:4.6px;border-radius:50%;background:#e0e0e0"></div>
<div style="position:absolute;right:749.2px;top:368.59999999999997px;height:16px;line-height:16px;font-size:12px;color:#d2d2d2;white-space:nowrap;text-align:right;">Influence</div>
<div style="position:absolute;left:1263.2px;top:368px;width:251.5999999999999px;height:17.80000000000001px;background:#545454;border-radius:4px;box-shadow:0 1.5px 0 rgba(0,0,0,0.22)"></div>
<div style="position:absolute;left:1263.2px;top:368px;width:229.5999999999999px;height:17.80000000000001px;background:#4772b3;border-radius:4px;box-shadow:0 1.5px 0 rgba(0,0,0,0.22);border-top-right-radius:0;border-bottom-right-radius:0"></div>
<div style="position:absolute;left:1492.8px;top:368px;width:0.8px;height:17.80000000000001px;background:rgba(0,0,0,0.3);border-radius:0px;"></div>
<div style="position:absolute;left:1178.0px;width:400px;text-align:center;top:368.59999999999997px;height:16px;line-height:16px;font-size:12px;color:#eeeeee;white-space:nowrap;">1.000</div>
<svg style="position:absolute;left:1496.3px;top:369.8px;overflow:visible" width="15" height="15" viewBox="0 0 15 15" ><circle cx="7.5" cy="7.5" r="6.6" fill="#e8e8e8"/><path d="M4.8 4.8 L10.2 10.2 M10.2 4.8 L4.8 10.2" stroke="#3a3a3a" stroke-width="1.8" stroke-linecap="round"/></svg>
<div style="position:absolute;left:1524.5px;top:374.59999999999997px;width:4.6px;height:4.6px;border-radius:50%;background:#e0e0e0"></div>
<div style="position:absolute;left:1076.4px;top:398.3px;width:469.1999999999998px;height:296.3px;background:#3d3d3d;border-radius:5px;border:1px solid #474747"></div>
<svg style="position:absolute;left:1083.3px;top:407.6px;overflow:visible" width="11.0" height="9.0" viewBox="0 0 11.0 9.0" ><path d="M1 2.25 L5.5 6.75 L10.0 2.25" fill="none" stroke="#cfcfcf" stroke-width="1.1" stroke-linecap="round" stroke-linejoin="round"/></svg>
<svg style="position:absolute;left:1098px;top:401.5px;overflow:visible" width="20" height="20" viewBox="-10 -10 20 20"><path d="M-2.4 -7.2 C-3.6 -3.5 -1.8 -0.2 1.3 -0.2 L3.8 -1.2" fill="none" stroke="#d6d6d6" stroke-width="1.3" stroke-linecap="round" opacity="0.8"/><path d="M7.2 -3.4 L3 -3.6 L5.6 0.4 Z" fill="#d6d6d6" opacity="0.8"/><path d="M-7.2 -1 C-8.4 2.7 -6.6 6.4 -2.8 6.4 L-0.2 5.4" fill="none" stroke="#d6d6d6" stroke-width="1.3" stroke-linecap="round"/><path d="M3.2 3 L-1 2.8 L1.6 6.8 Z" fill="#d6d6d6"/></svg>
<div style="position:absolute;left:1128.7px;top:401.8px;width:364.29999999999995px;height:19.0px;background:#1d1d1d;border-radius:4px;box-shadow:0 1.5px 0 rgba(0,0,0,0.22)"></div>
<div style="position:absolute;left:1136.5px;top:403.0px;height:16px;line-height:16px;font-size:12px;color:#e6e6e6;white-space:nowrap;">Copy Rotation</div>
<div style="position:absolute;left:1450.8px;top:401.8px;width:20.5px;height:19.0px;background:#4772b3;border-radius:0px;"></div>
<svg style="position:absolute;left:1453.5px;top:405.8px;overflow:visible" width="15" height="11" viewBox="0 0 15 11" ><path d="M0.4 5.5 C3.5 -0.6 11.5 -0.6 14.6 5.5 C11.5 11.6 3.5 11.6 0.4 5.5 Z" fill="#f4f4f4"/><path d="M2.5 5.5 C5.1 1.9 9.9 1.9 12.5 5.5 C9.9 9.1 5.1 9.1 2.5 5.5 Z" fill="#4772b3"/><circle cx="7.5" cy="5.5" r="2" fill="#f4f4f4"/></svg>
<div style="position:absolute;left:1471.3px;top:401.8px;width:22px;height:19.0px;background:#282828;border-radius:0px;border-top-right-radius:4px;border-bottom-right-radius:4px"></div>
<div style="position:absolute;left:1449.6px;top:401.8px;width:1.4px;height:19.0px;background:#333;border-radius:0px;"></div>
<div style="position:absolute;left:1470.8px;top:401.8px;width:1.4px;height:19.0px;background:#333;border-radius:0px;"></div>
<svg style="position:absolute;left:1477px;top:407.8px;overflow:visible" width="10" height="8" viewBox="0 0 10 8" ><path d="M1 2.0 L5 6.0 L9 2.0" fill="none" stroke="#d6d6d6" stroke-width="1.2" stroke-linecap="round" stroke-linejoin="round"/></svg>
<svg style="position:absolute;left:1500.6px;top:406.90000000000003px;overflow:visible" width="8.8" height="8.8" viewBox="0 0 8.8 8.8" ><path d="M0 0 L8.8 8.8 M8.8 0 L0 8.8" stroke="#d6d6d6" stroke-width="1.2" stroke-linecap="round"/></svg>
<svg style="position:absolute;left:1524px;top:411.3px;overflow:visible" width="12" height="6" viewBox="0 0 12 6" ><rect x="0.0" y="0" width="1.2" height="1.2" fill="#7a7a7a"/><rect x="0.0" y="3" width="1.2" height="1.2" fill="#7a7a7a"/><rect x="2.6" y="0" width="1.2" height="1.2" fill="#7a7a7a"/><rect x="2.6" y="3" width="1.2" height="1.2" fill="#7a7a7a"/><rect x="5.2" y="0" width="1.2" height="1.2" fill="#7a7a7a"/><rect x="5.2" y="3" width="1.2" height="1.2" fill="#7a7a7a"/><rect x="7.800000000000001" y="0" width="1.2" height="1.2" fill="#7a7a7a"/><rect x="7.800000000000001" y="3" width="1.2" height="1.2" fill="#7a7a7a"/></svg>
<div style="position:absolute;right:749.2px;top:435.34999999999997px;height:16px;line-height:16px;font-size:12px;color:#d2d2d2;white-space:nowrap;text-align:right;">Target</div>
<div style="position:absolute;left:1263.2px;top:434.5px;width:251.5999999999999px;height:18.30000000000001px;background:#1d1d1d;border-radius:4px;box-shadow:0 1.5px 0 rgba(0,0,0,0.22)"></div>
<svg style="position:absolute;left:1264.7px;top:433.65px;overflow:visible" width="20" height="20" viewBox="-10 -10 20 20"><rect x="-4.3" y="-3.9" width="8.6" height="7.8" fill="#e6e6e6"/><path d="M-7.2 -3.9999999999999996 L-7.2 -6.6 L-4.6 -6.6 M-7.2 3.9999999999999996 L-7.2 6.6 L-4.6 6.6 M7.2 -3.9999999999999996 L7.2 -6.6 L4.6 -6.6 M7.2 3.9999999999999996 L7.2 6.6 L4.6 6.6 " fill="none" stroke="#cfcfcf" stroke-width="1.2" opacity="0.7"/></svg>
<div style="position:absolute;left:1288.2px;top:435.34999999999997px;height:16px;line-height:16px;font-size:12px;color:#e6e6e6;white-space:nowrap;">Armature</div>
<svg style="position:absolute;left:1498.7px;top:439.34999999999997px;overflow:visible" width="8.6" height="8.6" viewBox="0 0 8.6 8.6" ><path d="M0 0 L8.6 8.6 M8.6 0 L0 8.6" stroke="#d0d0d0" stroke-width="1.2" stroke-linecap="round"/></svg>
<div style="position:absolute;right:749.2px;top:460.15000000000003px;height:16px;line-height:16px;font-size:12px;color:#d2d2d2;white-space:nowrap;text-align:right;">Bone</div>
<div style="position:absolute;left:1263.2px;top:459.3px;width:251.5999999999999px;height:18.30000000000001px;background:#1d1d1d;border-radius:4px;box-shadow:0 1.5px 0 rgba(0,0,0,0.22)"></div>
<svg style="position:absolute;left:1264.7px;top:458.45000000000005px;overflow:visible" width="20" height="20" viewBox="-10 -10 20 20"><g transform="scale(1.0) rotate(45)"><rect x="-5.5" y="-1.15" width="11" height="2.3" fill="#e6e6e6"/><circle cx="-6.4" cy="-1.75" r="1.85" fill="#e6e6e6"/><circle cx="-6.4" cy="1.75" r="1.85" fill="#e6e6e6"/><circle cx="6.4" cy="-1.75" r="1.85" fill="#e6e6e6"/><circle cx="6.4" cy="1.75" r="1.85" fill="#e6e6e6"/></g></svg>
<div style="position:absolute;left:1288.2px;top:460.15000000000003px;height:16px;line-height:16px;font-size:12px;color:#e6e6e6;white-space:nowrap;">CopySpine03</div>
<svg style="position:absolute;left:1498.7px;top:464.15000000000003px;overflow:visible" width="8.6" height="8.6" viewBox="0 0 8.6 8.6" ><path d="M0 0 L8.6 8.6 M8.6 0 L0 8.6" stroke="#d0d0d0" stroke-width="1.2" stroke-linecap="round"/></svg>
<div style="position:absolute;right:749.2px;top:486.9px;height:16px;line-height:16px;font-size:12px;color:#d2d2d2;white-space:nowrap;text-align:right;">Order</div>
<div style="position:absolute;left:1263.2px;top:486px;width:251.5999999999999px;height:18.399999999999977px;background:#282828;border-radius:4px;box-shadow:0 1.5px 0 rgba(0,0,0,0.22)"></div>
<div style="position:absolute;left:1270.2px;top:486.9px;height:16px;line-height:16px;font-size:12px;color:#e6e6e6;white-space:nowrap;">Default</div>
<svg style="position:absolute;left:1504.7px;top:493.2px;overflow:visible" width="8.2" height="6.2" viewBox="0 0 8.2 6.2" ><path d="M1 1.55 L4.1 4.65 L7.2 1.55" fill="none" stroke="#d6d6d6" stroke-width="1.2" stroke-linecap="round" stroke-linejoin="round"/></svg>
<div style="position:absolute;left:1524.5px;top:492.9px;width:4.6px;height:4.6px;border-radius:50%;background:#e0e0e0"></div>
<div style="position:absolute;right:749.2px;top:513.3px;height:16px;line-height:16px;font-size:12px;color:#d2d2d2;white-space:nowrap;text-align:right;">Axis</div>
<div style="position:absolute;left:1263.2px;top:512.4px;width:251.5999999999999px;height:18.399999999999977px;background:#4772b3;border-radius:4px;box-shadow:0 1.5px 0 rgba(0,0,0,0.22)"></div>
<div style="position:absolute;left:1345.3px;top:512.4px;width:1px;height:18.399999999999977px;background:rgba(0,0,0,0.35);border-radius:0px;"></div>
<div style="position:absolute;left:1430.2px;top:512.4px;width:1px;height:18.399999999999977px;background:rgba(0,0,0,0.35);border-radius:0px;"></div>
<div style="position:absolute;left:1104.5px;width:400px;text-align:center;top:513.3px;height:16px;line-height:16px;font-size:12px;color:#f0f0f0;white-space:nowrap;">X</div>
<div style="position:absolute;left:1188.25px;width:400px;text-align:center;top:513.3px;height:16px;line-height:16px;font-size:12px;color:#f0f0f0;white-space:nowrap;">Y</div>
<div style="position:absolute;left:1272.75px;width:400px;text-align:center;top:513.3px;height:16px;line-height:16px;font-size:12px;color:#f0f0f0;white-space:nowrap;">Z</div>
<div style="position:absolute;right:749.2px;top:539.85px;height:16px;line-height:16px;font-size:12px;color:#d2d2d2;white-space:nowrap;text-align:right;">Invert</div>
<div style="position:absolute;left:1263.2px;top:538.8px;width:251.5999999999999px;height:18.700000000000045px;background:#545454;border-radius:4px;box-shadow:0 1.5px 0 rgba(0,0,0,0.22)"></div>
<div style="position:absolute;left:1345.3px;top:538.8px;width:1px;height:18.700000000000045px;background:rgba(0,0,0,0.35);border-radius:0px;"></div>
<div style="position:absolute;left:1430.2px;top:538.8px;width:1px;height:18.700000000000045px;background:rgba(0,0,0,0.35);border-radius:0px;"></div>
<div style="position:absolute;left:1104.5px;width:400px;text-align:center;top:539.85px;height:16px;line-height:16px;font-size:12px;color:#e6e6e6;white-space:nowrap;">X</div>
<div style="position:absolute;left:1188.25px;width:400px;text-align:center;top:539.85px;height:16px;line-height:16px;font-size:12px;color:#e6e6e6;white-space:nowrap;">Y</div>
<div style="position:absolute;left:1272.75px;width:400px;text-align:center;top:539.85px;height:16px;line-height:16px;font-size:12px;color:#e6e6e6;white-space:nowrap;">Z</div>
<div style="position:absolute;right:749.2px;top:567.3000000000001px;height:16px;line-height:16px;font-size:12px;color:#d2d2d2;white-space:nowrap;text-align:right;">Mix</div>
<div style="position:absolute;left:1263.2px;top:566.2px;width:251.5999999999999px;height:18.799999999999955px;background:#282828;border-radius:4px;box-shadow:0 1.5px 0 rgba(0,0,0,0.22)"></div>
<div style="position:absolute;left:1270.2px;top:567.3000000000001px;height:16px;line-height:16px;font-size:12px;color:#e6e6e6;white-space:nowrap;">Replace</div>
<svg style="position:absolute;left:1504.7px;top:573.6px;overflow:visible" width="8.2" height="6.2" viewBox="0 0 8.2 6.2" ><path d="M1 1.55 L4.1 4.65 L7.2 1.55" fill="none" stroke="#d6d6d6" stroke-width="1.2" stroke-linecap="round" stroke-linejoin="round"/></svg>
<div style="position:absolute;left:1524.5px;top:573.3000000000001px;width:4.6px;height:4.6px;border-radius:50%;background:#e0e0e0"></div>
<div style="position:absolute;right:749.2px;top:604.0px;height:16px;line-height:16px;font-size:12px;color:#d2d2d2;white-space:nowrap;text-align:right;">Target</div>
<div style="position:absolute;left:1263.2px;top:603.3px;width:251.5999999999999px;height:18.0px;background:#282828;border-radius:4px;box-shadow:0 1.5px 0 rgba(0,0,0,0.22)"></div>
<div style="position:absolute;left:1270.2px;top:604.0px;height:16px;line-height:16px;font-size:12px;color:#e6e6e6;white-space:nowrap;">World Space</div>
<svg style="position:absolute;left:1504.7px;top:610.3px;overflow:visible" width="8.2" height="6.2" viewBox="0 0 8.2 6.2" ><path d="M1 1.55 L4.1 4.65 L7.2 1.55" fill="none" stroke="#d6d6d6" stroke-width="1.2" stroke-linecap="round" stroke-linejoin="round"/></svg>
<div style="position:absolute;left:1524.5px;top:610.0px;width:4.6px;height:4.6px;border-radius:50%;background:#e0e0e0"></div>
<div style="position:absolute;right:749.2px;top:630.9000000000001px;height:16px;line-height:16px;font-size:12px;color:#d2d2d2;white-space:nowrap;text-align:right;">Owner</div>
<div style="position:absolute;left:1263.2px;top:630px;width:251.5999999999999px;height:18.399999999999977px;background:#282828;border-radius:4px;box-shadow:0 1.5px 0 rgba(0,0,0,0.22)"></div>
<div style="position:absolute;left:1270.2px;top:630.9000000000001px;height:16px;line-height:16px;font-size:12px;color:#e6e6e6;white-space:nowrap;">World Space</div>
<svg style="position:absolute;left:1504.7px;top:637.2px;overflow:visible" width="8.2" height="6.2" viewBox="0 0 8.2 6.2" ><path d="M1 1.55 L4.1 4.65 L7.2 1.55" fill="none" stroke="#d6d6d6" stroke-width="1.2" stroke-linecap="round" stroke-linejoin="round"/></svg>
<div style="position:absolute;left:1524.5px;top:636.9000000000001px;width:4.6px;height:4.6px;border-radius:50%;background:#e0e0e0"></div>
<div style="position:absolute;right:749.2px;top:668.0500000000001px;height:16px;line-height:16px;font-size:12px;color:#d2d2d2;white-space:nowrap;text-align:right;">Influence</div>
<div style="position:absolute;left:1263.2px;top:667px;width:251.5999999999999px;height:18.700000000000045px;background:#545454;border-radius:4px;box-shadow:0 1.5px 0 rgba(0,0,0,0.22)"></div>
<div style="position:absolute;left:1263.2px;top:667px;width:229.5999999999999px;height:18.700000000000045px;background:#4772b3;border-radius:4px;box-shadow:0 1.5px 0 rgba(0,0,0,0.22);border-top-right-radius:0;border-bottom-right-radius:0"></div>
<div style="position:absolute;left:1492.8px;top:667px;width:0.8px;height:18.700000000000045px;background:rgba(0,0,0,0.3);border-radius:0px;"></div>
<div style="position:absolute;left:1178.0px;width:400px;text-align:center;top:668.0500000000001px;height:16px;line-height:16px;font-size:12px;color:#eeeeee;white-space:nowrap;">1.000</div>
<svg style="position:absolute;left:1496.3px;top:668.8px;overflow:visible" width="15" height="15" viewBox="0 0 15 15" ><circle cx="7.5" cy="7.5" r="6.6" fill="#e8e8e8"/><path d="M4.8 4.8 L10.2 10.2 M10.2 4.8 L4.8 10.2" stroke="#3a3a3a" stroke-width="1.8" stroke-linecap="round"/></svg>
<div style="position:absolute;left:1524.5px;top:674.0500000000001px;width:4.6px;height:4.6px;border-radius:50%;background:#e0e0e0"></div>
<div style="position:absolute;left:1076.4px;top:698.0px;width:469.1999999999998px;height:282.0px;background:#3d3d3d;border-radius:5px;border:1px solid #474747"></div>
<svg style="position:absolute;left:1083.3px;top:707.3px;overflow:visible" width="11.0" height="9.0" viewBox="0 0 11.0 9.0" ><path d="M1 2.25 L5.5 6.75 L10.0 2.25" fill="none" stroke="#cfcfcf" stroke-width="1.1" stroke-linecap="round" stroke-linejoin="round"/></svg>
<svg style="position:absolute;left:1098px;top:701.2px;overflow:visible" width="20" height="20" viewBox="-10 -10 20 20"><path d="M-2.8 -2.4 V-6.5 H6.9 V2.3 H2.5" fill="none" stroke="#d6d6d6" stroke-width="1.3" opacity="0.8"/><rect x="-6.9" y="-2.4" width="9.4" height="9.4" fill="#3d3d3d" stroke="#d6d6d6" stroke-width="1.3" opacity="0.95"/><rect x="-7.5" y="2.6" width="4.6" height="5" fill="#d6d6d6"/></svg>
<div style="position:absolute;left:1128.7px;top:701.5px;width:364.29999999999995px;height:19.0px;background:#1d1d1d;border-radius:4px;box-shadow:0 1.5px 0 rgba(0,0,0,0.22)"></div>
<div style="position:absolute;left:1136.5px;top:702.7px;height:16px;line-height:16px;font-size:12px;color:#e6e6e6;white-space:nowrap;">Copy Scale</div>
<div style="position:absolute;left:1450.8px;top:701.5px;width:20.5px;height:19.0px;background:#4772b3;border-radius:0px;"></div>
<svg style="position:absolute;left:1453.5px;top:705.5px;overflow:visible" width="15" height="11" viewBox="0 0 15 11" ><path d="M0.4 5.5 C3.5 -0.6 11.5 -0.6 14.6 5.5 C11.5 11.6 3.5 11.6 0.4 5.5 Z" fill="#f4f4f4"/><path d="M2.5 5.5 C5.1 1.9 9.9 1.9 12.5 5.5 C9.9 9.1 5.1 9.1 2.5 5.5 Z" fill="#4772b3"/><circle cx="7.5" cy="5.5" r="2" fill="#f4f4f4"/></svg>
<div style="position:absolute;left:1471.3px;top:701.5px;width:22px;height:19.0px;background:#282828;border-radius:0px;border-top-right-radius:4px;border-bottom-right-radius:4px"></div>
<div style="position:absolute;left:1449.6px;top:701.5px;width:1.4px;height:19.0px;background:#333;border-radius:0px;"></div>
<div style="position:absolute;left:1470.8px;top:701.5px;width:1.4px;height:19.0px;background:#333;border-radius:0px;"></div>
<svg style="position:absolute;left:1477px;top:707.5px;overflow:visible" width="10" height="8" viewBox="0 0 10 8" ><path d="M1 2.0 L5 6.0 L9 2.0" fill="none" stroke="#d6d6d6" stroke-width="1.2" stroke-linecap="round" stroke-linejoin="round"/></svg>
<svg style="position:absolute;left:1500.6px;top:706.6px;overflow:visible" width="8.8" height="8.8" viewBox="0 0 8.8 8.8" ><path d="M0 0 L8.8 8.8 M8.8 0 L0 8.8" stroke="#d6d6d6" stroke-width="1.2" stroke-linecap="round"/></svg>
<svg style="position:absolute;left:1524px;top:711.0px;overflow:visible" width="12" height="6" viewBox="0 0 12 6" ><rect x="0.0" y="0" width="1.2" height="1.2" fill="#7a7a7a"/><rect x="0.0" y="3" width="1.2" height="1.2" fill="#7a7a7a"/><rect x="2.6" y="0" width="1.2" height="1.2" fill="#7a7a7a"/><rect x="2.6" y="3" width="1.2" height="1.2" fill="#7a7a7a"/><rect x="5.2" y="0" width="1.2" height="1.2" fill="#7a7a7a"/><rect x="5.2" y="3" width="1.2" height="1.2" fill="#7a7a7a"/><rect x="7.800000000000001" y="0" width="1.2" height="1.2" fill="#7a7a7a"/><rect x="7.800000000000001" y="3" width="1.2" height="1.2" fill="#7a7a7a"/></svg>
<div style="position:absolute;right:749.2px;top:734.7px;height:16px;line-height:16px;font-size:12px;color:#d2d2d2;white-space:nowrap;text-align:right;">Target</div>
<div style="position:absolute;left:1263.2px;top:733.8px;width:251.5999999999999px;height:18.40000000000009px;background:#1d1d1d;border-radius:4px;box-shadow:0 1.5px 0 rgba(0,0,0,0.22)"></div>
<svg style="position:absolute;left:1264.7px;top:733.0px;overflow:visible" width="20" height="20" viewBox="-10 -10 20 20"><rect x="-4.3" y="-3.9" width="8.6" height="7.8" fill="#e6e6e6"/><path d="M-7.2 -3.9999999999999996 L-7.2 -6.6 L-4.6 -6.6 M-7.2 3.9999999999999996 L-7.2 6.6 L-4.6 6.6 M7.2 -3.9999999999999996 L7.2 -6.6 L4.6 -6.6 M7.2 3.9999999999999996 L7.2 6.6 L4.6 6.6 " fill="none" stroke="#cfcfcf" stroke-width="1.2" opacity="0.7"/></svg>
<div style="position:absolute;left:1288.2px;top:734.7px;height:16px;line-height:16px;font-size:12px;color:#e6e6e6;white-space:nowrap;">Armature</div>
<svg style="position:absolute;left:1498.7px;top:738.7px;overflow:visible" width="8.6" height="8.6" viewBox="0 0 8.6 8.6" ><path d="M0 0 L8.6 8.6 M8.6 0 L0 8.6" stroke="#d0d0d0" stroke-width="1.2" stroke-linecap="round"/></svg>
<div style="position:absolute;right:749.2px;top:759.9000000000001px;height:16px;line-height:16px;font-size:12px;color:#d2d2d2;white-space:nowrap;text-align:right;">Bone</div>
<div style="position:absolute;left:1263.2px;top:759.3px;width:251.5999999999999px;height:17.800000000000068px;background:#1d1d1d;border-radius:4px;box-shadow:0 1.5px 0 rgba(0,0,0,0.22)"></div>
<svg style="position:absolute;left:1264.7px;top:758.2px;overflow:visible" width="20" height="20" viewBox="-10 -10 20 20"><g transform="scale(1.0) rotate(45)"><rect x="-5.5" y="-1.15" width="11" height="2.3" fill="#e6e6e6"/><circle cx="-6.4" cy="-1.75" r="1.85" fill="#e6e6e6"/><circle cx="-6.4" cy="1.75" r="1.85" fill="#e6e6e6"/><circle cx="6.4" cy="-1.75" r="1.85" fill="#e6e6e6"/><circle cx="6.4" cy="1.75" r="1.85" fill="#e6e6e6"/></g></svg>
<div style="position:absolute;left:1288.2px;top:759.9000000000001px;height:16px;line-height:16px;font-size:12px;color:#e6e6e6;white-space:nowrap;">CopySpine03</div>
<svg style="position:absolute;left:1498.7px;top:763.9000000000001px;overflow:visible" width="8.6" height="8.6" viewBox="0 0 8.6 8.6" ><path d="M0 0 L8.6 8.6 M8.6 0 L0 8.6" stroke="#d0d0d0" stroke-width="1.2" stroke-linecap="round"/></svg>
<div style="position:absolute;right:749.2px;top:786.3500000000001px;height:16px;line-height:16px;font-size:12px;color:#d2d2d2;white-space:nowrap;text-align:right;">Axis</div>
<div style="position:absolute;left:1263.2px;top:785.6px;width:251.5999999999999px;height:18.100000000000023px;background:#4772b3;border-radius:4px;box-shadow:0 1.5px 0 rgba(0,0,0,0.22)"></div>
<div style="position:absolute;left:1345.3px;top:785.6px;width:1px;height:18.100000000000023px;background:rgba(0,0,0,0.35);border-radius:0px;"></div>
<div style="position:absolute;left:1430.2px;top:785.6px;width:1px;height:18.100000000000023px;background:rgba(0,0,0,0.35);border-radius:0px;"></div>
<div style="position:absolute;left:1104.5px;width:400px;text-align:center;top:786.3500000000001px;height:16px;line-height:16px;font-size:12px;color:#f0f0f0;white-space:nowrap;">X</div>
<div style="position:absolute;left:1188.25px;width:400px;text-align:center;top:786.3500000000001px;height:16px;line-height:16px;font-size:12px;color:#f0f0f0;white-space:nowrap;">Y</div>
<div style="position:absolute;left:1272.75px;width:400px;text-align:center;top:786.3500000000001px;height:16px;line-height:16px;font-size:12px;color:#f0f0f0;white-space:nowrap;">Z</div>
<div style="position:absolute;right:749.2px;top:813.1000000000001px;height:16px;line-height:16px;font-size:12px;color:#d2d2d2;white-space:nowrap;text-align:right;">Power</div>
<div style="position:absolute;left:1263.2px;top:812.2px;width:251.5999999999999px;height:18.399999999999977px;background:#545454;border-radius:4px;box-shadow:0 1.5px 0 rgba(0,0,0,0.22)"></div>
<div style="position:absolute;left:1189.0px;width:400px;text-align:center;top:813.1000000000001px;height:16px;line-height:16px;font-size:12px;color:#eeeeee;white-space:nowrap;">1.000</div>
<div style="position:absolute;left:1524.5px;top:819.1000000000001px;width:4.6px;height:4.6px;border-radius:50%;background:#e0e0e0"></div>
<div style="position:absolute;left:1263.2px;top:838.5px;width:13.6px;height:13.299999999999955px;background:#545454;border-radius:3px;box-shadow:0 1.5px 0 rgba(0,0,0,0.22)"></div>
<div style="position:absolute;left:1281.7px;top:836.85px;height:16px;line-height:16px;font-size:12px;color:#e6e6e6;white-space:nowrap;">Make Uniform</div>
<div style="position:absolute;left:1524.5px;top:842.85px;width:4.6px;height:4.6px;border-radius:50%;background:#e0e0e0"></div>
<div style="position:absolute;left:1263.2px;top:862px;width:13.6px;height:13.200000000000045px;background:#545454;border-radius:3px;box-shadow:0 1.5px 0 rgba(0,0,0,0.22)"></div>
<div style="position:absolute;left:1281.7px;top:860.3000000000001px;height:16px;line-height:16px;font-size:12px;color:#e6e6e6;white-space:nowrap;">Offset</div>
<div style="position:absolute;left:1524.5px;top:866.3000000000001px;width:4.6px;height:4.6px;border-radius:50%;background:#e0e0e0"></div>
<div style="position:absolute;left:1263.2px;top:885px;width:13.6px;height:14.299999999999955px;background:#4a4a4a;border-radius:3px;box-shadow:0 1.5px 0 rgba(0,0,0,0.22)"></div>
<div style="position:absolute;left:1281.7px;top:883.85px;height:16px;line-height:16px;font-size:12px;color:#8a8a8a;white-space:nowrap;">Additive</div>
<div style="position:absolute;left:1524.5px;top:889.85px;width:4.6px;height:4.6px;border-radius:50%;background:#606060"></div>
<div style="position:absolute;right:749.2px;top:921.1px;height:16px;line-height:16px;font-size:12px;color:#d2d2d2;white-space:nowrap;text-align:right;">Target</div>
<div style="position:absolute;left:1263.2px;top:920.5px;width:251.5999999999999px;height:17.799999999999955px;background:#282828;border-radius:4px;box-shadow:0 1.5px 0 rgba(0,0,0,0.22)"></div>
<div style="position:absolute;left:1270.2px;top:921.1px;height:16px;line-height:16px;font-size:12px;color:#e6e6e6;white-space:nowrap;">World Space</div>
<svg style="position:absolute;left:1504.7px;top:927.4px;overflow:visible" width="8.2" height="6.2" viewBox="0 0 8.2 6.2" ><path d="M1 1.55 L4.1 4.65 L7.2 1.55" fill="none" stroke="#d6d6d6" stroke-width="1.2" stroke-linecap="round" stroke-linejoin="round"/></svg>
<div style="position:absolute;left:1524.5px;top:927.1px;width:4.6px;height:4.6px;border-radius:50%;background:#e0e0e0"></div>
<div style="position:absolute;right:749.2px;top:947.6px;height:16px;line-height:16px;font-size:12px;color:#d2d2d2;white-space:nowrap;text-align:right;">Owner</div>
<div style="position:absolute;left:1263.2px;top:946.8px;width:251.5999999999999px;height:18.200000000000045px;background:#282828;border-radius:4px;box-shadow:0 1.5px 0 rgba(0,0,0,0.22)"></div>
<div style="position:absolute;left:1270.2px;top:947.6px;height:16px;line-height:16px;font-size:12px;color:#e6e6e6;white-space:nowrap;">World Space</div>
<svg style="position:absolute;left:1504.7px;top:953.9px;overflow:visible" width="8.2" height="6.2" viewBox="0 0 8.2 6.2" ><path d="M1 1.55 L4.1 4.65 L7.2 1.55" fill="none" stroke="#d6d6d6" stroke-width="1.2" stroke-linecap="round" stroke-linejoin="round"/></svg>
<div style="position:absolute;left:1524.5px;top:953.6px;width:4.6px;height:4.6px;border-radius:50%;background:#e0e0e0"></div>
</div></div>
<div style="position:absolute;left:1559.5px;top:0;width:441px;height:962px;overflow:hidden">
<div style="position:absolute;left:-1559.5px;top:0;width:2000px;height:962px">
<div style="position:absolute;left:1559.5px;top:0px;width:440.5px;height:962px;background:#282828;border-radius:0px;"></div>
<div style="position:absolute;left:1559.5px;top:47.535px;width:440.5px;height:21.87px;background:#2b2b2b;border-radius:0px;"></div>
<div style="position:absolute;left:1559.5px;top:91.275px;width:440.5px;height:21.87px;background:#2b2b2b;border-radius:0px;"></div>
<div style="position:absolute;left:1559.5px;top:135.01500000000001px;width:440.5px;height:21.87px;background:#2b2b2b;border-radius:0px;"></div>
<div style="position:absolute;left:1559.5px;top:178.755px;width:440.5px;height:21.87px;background:#2b2b2b;border-radius:0px;"></div>
<div style="position:absolute;left:1559.5px;top:222.495px;width:440.5px;height:21.87px;background:#2b2b2b;border-radius:0px;"></div>
<div style="position:absolute;left:1559.5px;top:266.235px;width:440.5px;height:21.87px;background:#2b2b2b;border-radius:0px;"></div>
<div style="position:absolute;left:1559.5px;top:309.975px;width:440.5px;height:21.87px;background:#2b2b2b;border-radius:0px;"></div>
<div style="position:absolute;left:1559.5px;top:353.71500000000003px;width:440.5px;height:21.87px;background:#2b2b2b;border-radius:0px;"></div>
<div style="position:absolute;left:1559.5px;top:397.45500000000004px;width:440.5px;height:21.87px;background:#2b2b2b;border-radius:0px;"></div>
<div style="position:absolute;left:1559.5px;top:441.19500000000005px;width:440.5px;height:21.87px;background:#2b2b2b;border-radius:0px;"></div>
<div style="position:absolute;left:1559.5px;top:484.93500000000006px;width:440.5px;height:21.87px;background:#2b2b2b;border-radius:0px;"></div>
<div style="position:absolute;left:1559.5px;top:528.6750000000001px;width:440.5px;height:21.87px;background:#2b2b2b;border-radius:0px;"></div>
<div style="position:absolute;left:1559.5px;top:572.4150000000001px;width:440.5px;height:21.87px;background:#2b2b2b;border-radius:0px;"></div>
<div style="position:absolute;left:1559.5px;top:616.1550000000001px;width:440.5px;height:21.87px;background:#2b2b2b;border-radius:0px;"></div>
<div style="position:absolute;left:1559.5px;top:659.8950000000001px;width:440.5px;height:21.87px;background:#2b2b2b;border-radius:0px;"></div>
<div style="position:absolute;left:1559.5px;top:703.6350000000001px;width:440.5px;height:21.87px;background:#2b2b2b;border-radius:0px;"></div>
<div style="position:absolute;left:1559.5px;top:747.3750000000001px;width:440.5px;height:21.87px;background:#2b2b2b;border-radius:0px;"></div>
<div style="position:absolute;left:1559.5px;top:791.1150000000001px;width:440.5px;height:21.87px;background:#2b2b2b;border-radius:0px;"></div>
<div style="position:absolute;left:1559.5px;top:834.8550000000001px;width:440.5px;height:21.87px;background:#2b2b2b;border-radius:0px;"></div>
<div style="position:absolute;left:1559.5px;top:878.5950000000001px;width:440.5px;height:21.87px;background:#2b2b2b;border-radius:0px;"></div>
<div style="position:absolute;left:1559.5px;top:922.3350000000002px;width:440.5px;height:21.87px;background:#2b2b2b;border-radius:0px;"></div>
<div style="position:absolute;left:1559.5px;top:966.0750000000002px;width:440.5px;height:21.87px;background:#2b2b2b;border-radius:0px;"></div>
<div style="position:absolute;left:1559.5px;top:0px;width:440.5px;height:25px;background:#282828;border-radius:0px;"></div>
<div style="position:absolute;left:1567.6px;top:-5px;width:34.5px;height:24.5px;background:#2a2a2a;border-radius:5px;border:1px solid #3c3c3c"></div>
<svg style="position:absolute;left:1570px;top:1px;overflow:visible" width="18" height="17" viewBox="0 0 18 17" ><rect x="2" y="1" width="5" height="3.5" rx="1" fill="#e0e0e0"/><path d="M4 4.5 V13 H8 M4 9 H8" fill="none" stroke="#9a9a9a" stroke-width="1"/><rect x="8" y="7.5" width="7" height="3" rx="1" fill="#e0e0e0"/><rect x="8" y="11.5" width="7" height="3" rx="1" fill="#e0e0e0"/></svg>
<svg style="position:absolute;left:1590.7px;top:6.2px;overflow:visible" width="8.6" height="6.6" viewBox="0 0 8.6 6.6" ><path d="M1 1.65 L4.3 4.949999999999999 L7.6 1.65" fill="none" stroke="#d6d6d6" stroke-width="1.1" stroke-linecap="round" stroke-linejoin="round"/></svg>
<div style="position:absolute;left:1607px;top:-5px;width:34.5px;height:24.5px;background:#2a2a2a;border-radius:5px;border:1px solid #3c3c3c"></div>
<svg style="position:absolute;left:1610px;top:1px;overflow:visible" width="18" height="17" viewBox="0 0 18 17" ><rect x="6" y="1.5" width="10" height="10" rx="1" fill="none" stroke="#e0e0e0" stroke-width="1.3"/><path d="M7.5 10 L10.5 5 L14 10 Z" fill="#e0e0e0"/><circle cx="13" cy="4.5" r="1" fill="#e0e0e0"/><path d="M4 4 V13.5 H13.5 M2 6 V15.5 H11.5" fill="none" stroke="#9a9a9a" stroke-width="1"/></svg>
<svg style="position:absolute;left:1629.7px;top:6.2px;overflow:visible" width="8.6" height="6.6" viewBox="0 0 8.6 6.6" ><path d="M1 1.65 L4.3 4.949999999999999 L7.6 1.65" fill="none" stroke="#d6d6d6" stroke-width="1.1" stroke-linecap="round" stroke-linejoin="round"/></svg>
<div style="position:absolute;left:1708px;top:-5px;width:122.5px;height:24.5px;background:#1d1d1d;border-radius:5px;border:1px solid #383838"></div>
<svg style="position:absolute;left:1711px;top:1px;overflow:visible" width="16" height="17" viewBox="0 0 16 17" ><circle cx="6.5" cy="7" r="4.6" fill="none" stroke="#d6d6d6" stroke-width="1.3"/><path d="M10 10.5 L14 14.5" stroke="#d6d6d6" stroke-width="1.4" stroke-linecap="round"/></svg>
<div style="position:absolute;left:1735px;top:1px;height:16px;line-height:16px;font-size:12px;color:#8a8a8a;white-space:nowrap;">Search</div>
<div style="position:absolute;left:1933.5px;top:-5px;width:33.5px;height:24.5px;background:#2a2a2a;border-radius:5px;border:1px solid #3c3c3c"></div>
<svg style="position:absolute;left:1936px;top:1px;overflow:visible" width="16" height="17" viewBox="0 0 16 17" ><path d="M1.5 2 H14.5 L9.5 8.5 V14 L6.5 15.5 V8.5 Z" fill="none" stroke="#dcdcdc" stroke-width="1.2" stroke-linejoin="round"/></svg>
<svg style="position:absolute;left:1955.7px;top:6.2px;overflow:visible" width="8.6" height="6.6" viewBox="0 0 8.6 6.6" ><path d="M1 1.65 L4.3 4.949999999999999 L7.6 1.65" fill="none" stroke="#d6d6d6" stroke-width="1.1" stroke-linecap="round" stroke-linejoin="round"/></svg>
<div style="position:absolute;left:1972.5px;top:-5px;width:21px;height:24.5px;background:#474747;border-radius:5px;"></div>
<svg style="position:absolute;left:1974px;top:1px;overflow:visible" width="18" height="17" viewBox="0 0 18 17" ><rect x="2.5" y="5.5" width="10" height="3" fill="none" stroke="#c8c8c8" stroke-width="1"/><rect x="3" y="8.5" width="9" height="7" fill="none" stroke="#c8c8c8" stroke-width="1.1"/><rect x="6" y="10.5" width="3" height="1.2" fill="#c8c8c8"/><circle cx="13.2" cy="5" r="3.7" fill="#e6e6e6"/><path d="M13.2 2.6 V7.4 M10.8 5 H15.6" stroke="#474747" stroke-width="1.2"/></svg>
<div style="position:absolute;left:1562px;top:69.04px;width:437.5px;height:19.6px;background:#334d80;border-radius:4px;border:1px solid #4772b3"></div>
<div style="position:absolute;left:1562px;top:200.26px;width:437.5px;height:19.6px;background:#334d80;border-radius:4px;border:1px solid #4772b3"></div>
<div style="position:absolute;left:1588.9px;top:73px;width:1.9px;height:318px;background:#787878;border-radius:0px;"></div>
<svg style="position:absolute;left:1582.5px;top:28.6px;overflow:visible" width="16" height="16" viewBox="0 0 16 16" ><rect x="1" y="2" width="14" height="3.6" fill="#e0e0e0"/><rect x="2" y="6.6" width="12" height="8" fill="#e0e0e0"/><rect x="6" y="8.2" width="4" height="1.5" fill="#282828"/></svg>
<div style="position:absolute;left:1607.6px;top:28.9px;height:16px;line-height:16px;font-size:12px;color:#e0e0e0;white-space:nowrap;">Scene Collection</div>
<svg style="position:absolute;left:1585.5px;top:54.769999999999996px;overflow:visible" width="10" height="8" viewBox="0 0 10 8" ><path d="M1 2.0 L5 6.0 L9 2.0" fill="none" stroke="#cfcfcf" stroke-width="1.1" stroke-linecap="round" stroke-linejoin="round"/></svg>
<div style="position:absolute;left:1603.0px;top:48.97px;width:19px;height:19px;background:rgba(255,255,255,0.13);border-radius:5px;border:1px solid rgba(255,255,255,0.10)"></div>
<svg style="position:absolute;left:1604.5px;top:50.47px;overflow:visible" width="16" height="16" viewBox="0 0 16 16" ><rect x="1" y="2" width="14" height="3.6" fill="#e0e0e0"/><rect x="2" y="6.6" width="12" height="8" fill="#e0e0e0"/><rect x="6" y="8.2" width="4" height="1.5" fill="#282828"/></svg>
<div style="position:absolute;left:1629.4px;top:50.769999999999996px;height:16px;line-height:16px;font-size:12px;color:#e0e0e0;white-space:nowrap;">Collection</div>
<svg style="position:absolute;left:1564px;top:71.34px;overflow:visible" width="18" height="18" viewBox="0 0 18 18" ><rect x="1.5" y="2" width="3.5" height="3.5" fill="#e6e6e6"/><circle cx="9.5" cy="2.8" r="1.4" fill="none" stroke="#e6e6e6" stroke-width="1"/><path d="M9.5 4.3 V10 L5.5 16 M9.5 10 L13 16 M6 6.5 L9.5 5.5 L16 5.5" fill="none" stroke="#e6e6e6" stroke-width="1"/></svg>
<svg style="position:absolute;left:1607px;top:76.64px;overflow:visible" width="10" height="8" viewBox="0 0 10 8" ><path d="M1 2.0 L5 6.0 L9 2.0" fill="none" stroke="#cfcfcf" stroke-width="1.1" stroke-linecap="round" stroke-linejoin="round"/></svg>
<div style="position:absolute;left:1625.0px;top:70.84px;width:19px;height:19px;background:rgba(255,255,255,0.13);border-radius:5px;border:1px solid rgba(255,255,255,0.10)"></div>
<svg style="position:absolute;left:1625.5px;top:71.34px;overflow:visible" width="18" height="18" viewBox="0 0 18 18" ><circle cx="9" cy="3.2" r="2.3" fill="#e5974b"/><path d="M2.5 6 L9 7.5 L15.5 6 M9 7.5 V10.5 L4.5 16 M9 10.5 L13.5 16" fill="none" stroke="#e5974b" stroke-width="2.6" stroke-linecap="round"/></svg>
<div style="position:absolute;left:1651.2px;top:72.64px;height:16px;line-height:16px;font-size:12px;color:#f0a640;white-space:nowrap;">Armature</div>
<svg style="position:absolute;left:1950.0px;top:74.34px;overflow:visible" width="15" height="10" viewBox="0 0 15 10" ><path d="M0.4 5 C3.5 -0.9 11.5 -0.9 14.6 5 C11.5 10.9 3.5 10.9 0.4 5 Z" fill="#e6e6e6"/><path d="M2.7 5 C5.2 1.6 9.8 1.6 12.3 5 C9.8 8.4 5.2 8.4 2.7 5 Z" fill="#334d80"/><circle cx="7.5" cy="5" r="2.4" fill="#e6e6e6"/><circle cx="7.5" cy="5" r="0.8" fill="#334d80"/></svg>
<svg style="position:absolute;left:1971px;top:72.34px;overflow:visible" width="16" height="14" viewBox="0 0 16 14" ><path d="M1.2 4 Q1.2 2.8 2.4 2.8 H4.5 L5.8 1 H10.2 L11.5 2.8 H13.6 Q14.8 2.8 14.8 4 V11.5 Q14.8 12.7 13.6 12.7 H2.4 Q1.2 12.7 1.2 11.5 Z" fill="#e6e6e6"/><circle cx="8" cy="7.4" r="3.9" fill="#334d80"/><circle cx="8" cy="7.4" r="2.9" fill="#e6e6e6"/><circle cx="8" cy="7.4" r="1.9" fill="#334d80"/><circle cx="8" cy="7.4" r="1" fill="#e6e6e6" opacity="0.4"/></svg>
<svg style="position:absolute;left:1929.5px;top:51.47px;overflow:visible" width="12" height="12" viewBox="0 0 12 12" ><rect x="0.5" y="0.5" width="11" height="11" rx="1.5" fill="#e6e6e6"/><path d="M2.8 6 L5 8.3 L9.5 3.3" fill="none" stroke="#282828" stroke-width="1.6"/></svg>
<svg style="position:absolute;left:1950.0px;top:52.47px;overflow:visible" width="15" height="10" viewBox="0 0 15 10" ><path d="M0.4 5 C3.5 -0.9 11.5 -0.9 14.6 5 C11.5 10.9 3.5 10.9 0.4 5 Z" fill="#e6e6e6"/><path d="M2.7 5 C5.2 1.6 9.8 1.6 12.3 5 C9.8 8.4 5.2 8.4 2.7 5 Z" fill="#282828"/><circle cx="7.5" cy="5" r="2.4" fill="#e6e6e6"/><circle cx="7.5" cy="5" r="0.8" fill="#282828"/></svg>
<svg style="position:absolute;left:1971px;top:50.47px;overflow:visible" width="16" height="14" viewBox="0 0 16 14" ><path d="M1.2 4 Q1.2 2.8 2.4 2.8 H4.5 L5.8 1 H10.2 L11.5 2.8 H13.6 Q14.8 2.8 14.8 4 V11.5 Q14.8 12.7 13.6 12.7 H2.4 Q1.2 12.7 1.2 11.5 Z" fill="#e6e6e6"/><circle cx="8" cy="7.4" r="3.9" fill="#282828"/><circle cx="8" cy="7.4" r="2.9" fill="#e6e6e6"/><circle cx="8" cy="7.4" r="1.9" fill="#282828"/><circle cx="8" cy="7.4" r="1" fill="#e6e6e6" opacity="0.4"/></svg>
<svg style="position:absolute;left:1629px;top:98.51px;overflow:visible" width="10" height="8" viewBox="0 0 10 8" ><path d="M1 2.0 L5 6.0 L9 2.0" fill="none" stroke="#cfcfcf" stroke-width="1.1" stroke-linecap="round" stroke-linejoin="round"/></svg>
<div style="position:absolute;left:1647.0px;top:92.71000000000001px;width:19px;height:19px;background:rgba(255,255,255,0.13);border-radius:5px;border:1px solid rgba(255,255,255,0.10)"></div>
<svg style="position:absolute;left:1647.5px;top:93.21000000000001px;overflow:visible" width="18" height="18" viewBox="0 0 18 18" ><circle cx="9.5" cy="3" r="1.8" fill="none" stroke="#1ebf8c" stroke-width="1.1"/><path d="M2 5 L5 7 L10 6 L13 8 M10 6 L8 10 L3 14 M8 10 L13 11 L15 15" fill="none" stroke="#1ebf8c" stroke-width="1.4" stroke-linejoin="round"/></svg>
<div style="position:absolute;left:1672.8px;top:94.51px;height:16px;line-height:16px;font-size:12px;color:#e0e0e0;white-space:nowrap;">Pose</div>
<svg style="position:absolute;left:1651px;top:120.38000000000001px;overflow:visible" width="10" height="8" viewBox="0 0 10 8" ><path d="M1 2.0 L5 6.0 L9 2.0" fill="none" stroke="#cfcfcf" stroke-width="1.1" stroke-linecap="round" stroke-linejoin="round"/></svg>
<svg style="position:absolute;left:1668.5px;top:113.28000000000002px;overflow:visible" width="20" height="20" viewBox="-10 -10 20 20"><g transform="scale(0.95) rotate(45)"><rect x="-5.5" y="-1.15" width="11" height="2.3" fill="#1ebf8c"/><circle cx="-6.4" cy="-1.75" r="1.85" fill="#1ebf8c"/><circle cx="-6.4" cy="1.75" r="1.85" fill="#1ebf8c"/><circle cx="6.4" cy="-1.75" r="1.85" fill="#1ebf8c"/><circle cx="6.4" cy="1.75" r="1.85" fill="#1ebf8c"/></g></svg>
<div style="position:absolute;left:1694.5px;top:116.38000000000001px;height:16px;line-height:16px;font-size:12px;color:#e0e0e0;white-space:nowrap;">Spine01</div>
<svg style="position:absolute;left:1674px;top:140.95000000000002px;overflow:visible" width="8" height="10" viewBox="0 0 8 10" ><path d="M2.0 1 L6.0 5 L2.0 9" fill="none" stroke="#cfcfcf" stroke-width="1.1" stroke-linecap="round" stroke-linejoin="round"/></svg>
<svg style="position:absolute;left:1691.5px;top:136.95000000000002px;overflow:visible" width="18" height="18" viewBox="0 0 18 18" ><path d="M3.2 15.5 C0.2 13 1 8.5 5 5.2 L10.5 1.8 C13.5 0.5 16 2.5 15.2 5.5 L12.5 11.5 C10 15.5 6 17 3.2 15.5 Z" fill="none" stroke="#6d8fd8" stroke-width="1.3"/><circle cx="6.8" cy="11.3" r="2.5" fill="#8fb0f5" stroke="#6d8fd8" stroke-width="1.5"/><circle cx="6.8" cy="11.3" r="0.9" fill="#2a2a2a"/><circle cx="12.2" cy="4.6" r="1" fill="#6d8fd8"/></svg>
<div style="position:absolute;left:1716.5px;top:138.25000000000003px;height:16px;line-height:16px;font-size:12px;color:#e0e0e0;white-space:nowrap;">Constraints</div>
<svg style="position:absolute;left:1798.5px;top:135.45000000000002px;overflow:visible" width="20" height="20" viewBox="-10 -10 20 20"><path d="M-0.75 -4.5 V1.5 H5.8" fill="none" stroke="#6d8fd8" stroke-width="1.2" opacity="0.8"/><path d="M-3.2 -3.6 L-0.75 -6.3 L1.7 -3.6 Z M5.2 -1 L7.9 1.5 L5.2 4 Z" fill="#6d8fd8" opacity="0.8"/><path d="M-4.8 -1 V5.5 H1.8" fill="none" stroke="#6d8fd8" stroke-width="1.3"/><path d="M-7.3 -0.2 L-4.8 -2.9 L-2.3 -0.2 Z M1.2 3 L3.9 5.5 L1.2 8 Z" fill="#6d8fd8"/></svg>
<svg style="position:absolute;left:1820.5px;top:135.45000000000002px;overflow:visible" width="20" height="20" viewBox="-10 -10 20 20"><path d="M-2.4 -7.2 C-3.6 -3.5 -1.8 -0.2 1.3 -0.2 L3.8 -1.2" fill="none" stroke="#6d8fd8" stroke-width="1.3" stroke-linecap="round" opacity="0.8"/><path d="M7.2 -3.4 L3 -3.6 L5.6 0.4 Z" fill="#6d8fd8" opacity="0.8"/><path d="M-7.2 -1 C-8.4 2.7 -6.6 6.4 -2.8 6.4 L-0.2 5.4" fill="none" stroke="#6d8fd8" stroke-width="1.3" stroke-linecap="round"/><path d="M3.2 3 L-1 2.8 L1.6 6.8 Z" fill="#6d8fd8"/></svg>
<svg style="position:absolute;left:1842.5px;top:135.45000000000002px;overflow:visible" width="20" height="20" viewBox="-10 -10 20 20"><path d="M-2.8 -2.4 V-6.5 H6.9 V2.3 H2.5" fill="none" stroke="#6d8fd8" stroke-width="1.3" opacity="0.8"/><rect x="-6.9" y="-2.4" width="9.4" height="9.4" fill="#2b2b2b" stroke="#6d8fd8" stroke-width="1.3" opacity="0.95"/><rect x="-7.5" y="2.6" width="4.6" height="5" fill="#6d8fd8"/></svg>
<svg style="position:absolute;left:1673px;top:164.12px;overflow:visible" width="10" height="8" viewBox="0 0 10 8" ><path d="M1 2.0 L5 6.0 L9 2.0" fill="none" stroke="#cfcfcf" stroke-width="1.1" stroke-linecap="round" stroke-linejoin="round"/></svg>
<svg style="position:absolute;left:1690.5px;top:157.01999999999998px;overflow:visible" width="20" height="20" viewBox="-10 -10 20 20"><g transform="scale(0.95) rotate(45)"><rect x="-5.5" y="-1.15" width="11" height="2.3" fill="#1ebf8c"/><circle cx="-6.4" cy="-1.75" r="1.85" fill="#1ebf8c"/><circle cx="-6.4" cy="1.75" r="1.85" fill="#1ebf8c"/><circle cx="6.4" cy="-1.75" r="1.85" fill="#1ebf8c"/><circle cx="6.4" cy="1.75" r="1.85" fill="#1ebf8c"/></g></svg>
<div style="position:absolute;left:1716.5px;top:160.12px;height:16px;line-height:16px;font-size:12px;color:#e0e0e0;white-space:nowrap;">Spine02</div>
<svg style="position:absolute;left:1696px;top:184.69px;overflow:visible" width="8" height="10" viewBox="0 0 8 10" ><path d="M2.0 1 L6.0 5 L2.0 9" fill="none" stroke="#cfcfcf" stroke-width="1.1" stroke-linecap="round" stroke-linejoin="round"/></svg>
<svg style="position:absolute;left:1713.5px;top:180.69px;overflow:visible" width="18" height="18" viewBox="0 0 18 18" ><path d="M3.2 15.5 C0.2 13 1 8.5 5 5.2 L10.5 1.8 C13.5 0.5 16 2.5 15.2 5.5 L12.5 11.5 C10 15.5 6 17 3.2 15.5 Z" fill="none" stroke="#6d8fd8" stroke-width="1.3"/><circle cx="6.8" cy="11.3" r="2.5" fill="#8fb0f5" stroke="#6d8fd8" stroke-width="1.5"/><circle cx="6.8" cy="11.3" r="0.9" fill="#2a2a2a"/><circle cx="12.2" cy="4.6" r="1" fill="#6d8fd8"/></svg>
<div style="position:absolute;left:1738.5px;top:181.99px;height:16px;line-height:16px;font-size:12px;color:#e0e0e0;white-space:nowrap;">Constraints</div>
<svg style="position:absolute;left:1820.5px;top:179.19px;overflow:visible" width="20" height="20" viewBox="-10 -10 20 20"><path d="M-0.75 -4.5 V1.5 H5.8" fill="none" stroke="#6d8fd8" stroke-width="1.2" opacity="0.8"/><path d="M-3.2 -3.6 L-0.75 -6.3 L1.7 -3.6 Z M5.2 -1 L7.9 1.5 L5.2 4 Z" fill="#6d8fd8" opacity="0.8"/><path d="M-4.8 -1 V5.5 H1.8" fill="none" stroke="#6d8fd8" stroke-width="1.3"/><path d="M-7.3 -0.2 L-4.8 -2.9 L-2.3 -0.2 Z M1.2 3 L3.9 5.5 L1.2 8 Z" fill="#6d8fd8"/></svg>
<svg style="position:absolute;left:1842.5px;top:179.19px;overflow:visible" width="20" height="20" viewBox="-10 -10 20 20"><path d="M-2.4 -7.2 C-3.6 -3.5 -1.8 -0.2 1.3 -0.2 L3.8 -1.2" fill="none" stroke="#6d8fd8" stroke-width="1.3" stroke-linecap="round" opacity="0.8"/><path d="M7.2 -3.4 L3 -3.6 L5.6 0.4 Z" fill="#6d8fd8" opacity="0.8"/><path d="M-7.2 -1 C-8.4 2.7 -6.6 6.4 -2.8 6.4 L-0.2 5.4" fill="none" stroke="#6d8fd8" stroke-width="1.3" stroke-linecap="round"/><path d="M3.2 3 L-1 2.8 L1.6 6.8 Z" fill="#6d8fd8"/></svg>
<svg style="position:absolute;left:1864.5px;top:179.19px;overflow:visible" width="20" height="20" viewBox="-10 -10 20 20"><path d="M-2.8 -2.4 V-6.5 H6.9 V2.3 H2.5" fill="none" stroke="#6d8fd8" stroke-width="1.3" opacity="0.8"/><rect x="-6.9" y="-2.4" width="9.4" height="9.4" fill="#2b2b2b" stroke="#6d8fd8" stroke-width="1.3" opacity="0.95"/><rect x="-7.5" y="2.6" width="4.6" height="5" fill="#6d8fd8"/></svg>
<svg style="position:absolute;left:1696px;top:206.56px;overflow:visible" width="8" height="10" viewBox="0 0 8 10" ><path d="M2.0 1 L6.0 5 L2.0 9" fill="none" stroke="#cfcfcf" stroke-width="1.1" stroke-linecap="round" stroke-linejoin="round"/></svg>
<div style="position:absolute;left:1713.0px;top:202.06px;width:19px;height:19px;background:rgba(255,255,255,0.13);border-radius:5px;border:1px solid rgba(255,255,255,0.10)"></div>
<svg style="position:absolute;left:1712.5px;top:200.76px;overflow:visible" width="20" height="20" viewBox="-10 -10 20 20"><g transform="scale(0.95) rotate(45)"><rect x="-5.5" y="-1.15" width="11" height="2.3" fill="#1ebf8c"/><circle cx="-6.4" cy="-1.75" r="1.85" fill="#1ebf8c"/><circle cx="-6.4" cy="1.75" r="1.85" fill="#1ebf8c"/><circle cx="6.4" cy="-1.75" r="1.85" fill="#1ebf8c"/><circle cx="6.4" cy="1.75" r="1.85" fill="#1ebf8c"/></g></svg>
<div style="position:absolute;left:1738.3px;top:203.86px;height:16px;line-height:16px;font-size:12px;color:#f2f2f2;white-space:nowrap;">Spine03</div>
<svg style="position:absolute;left:1805.5px;top:202.56px;overflow:visible" width="18" height="18" viewBox="0 0 18 18" ><path d="M3.2 15.5 C0.2 13 1 8.5 5 5.2 L10.5 1.8 C13.5 0.5 16 2.5 15.2 5.5 L12.5 11.5 C10 15.5 6 17 3.2 15.5 Z" fill="none" stroke="#6d8fd8" stroke-width="1.3"/><circle cx="6.8" cy="11.3" r="2.5" fill="#8fb0f5" stroke="#6d8fd8" stroke-width="1.5"/><circle cx="6.8" cy="11.3" r="0.9" fill="#2a2a2a"/><circle cx="12.2" cy="4.6" r="1" fill="#6d8fd8"/></svg>
<svg style="position:absolute;left:1651px;top:229.73000000000002px;overflow:visible" width="10" height="8" viewBox="0 0 10 8" ><path d="M1 2.0 L5 6.0 L9 2.0" fill="none" stroke="#cfcfcf" stroke-width="1.1" stroke-linecap="round" stroke-linejoin="round"/></svg>
<svg style="position:absolute;left:1668.5px;top:222.63px;overflow:visible" width="20" height="20" viewBox="-10 -10 20 20"><g transform="scale(0.95) rotate(45)"><rect x="-5.5" y="-1.15" width="11" height="2.3" fill="#1ebf8c"/><circle cx="-6.4" cy="-1.75" r="1.85" fill="#1ebf8c"/><circle cx="-6.4" cy="1.75" r="1.85" fill="#1ebf8c"/><circle cx="6.4" cy="-1.75" r="1.85" fill="#1ebf8c"/><circle cx="6.4" cy="1.75" r="1.85" fill="#1ebf8c"/></g></svg>
<div style="position:absolute;left:1694.5px;top:225.73000000000002px;height:16px;line-height:16px;font-size:12px;color:#e0e0e0;white-space:nowrap;">InvertedSpine03</div>
<svg style="position:absolute;left:1673px;top:251.60000000000002px;overflow:visible" width="10" height="8" viewBox="0 0 10 8" ><path d="M1 2.0 L5 6.0 L9 2.0" fill="none" stroke="#cfcfcf" stroke-width="1.1" stroke-linecap="round" stroke-linejoin="round"/></svg>
<svg style="position:absolute;left:1690.5px;top:244.5px;overflow:visible" width="20" height="20" viewBox="-10 -10 20 20"><g transform="scale(0.95) rotate(45)"><rect x="-5.5" y="-1.15" width="11" height="2.3" fill="#1ebf8c"/><circle cx="-6.4" cy="-1.75" r="1.85" fill="#1ebf8c"/><circle cx="-6.4" cy="1.75" r="1.85" fill="#1ebf8c"/><circle cx="6.4" cy="-1.75" r="1.85" fill="#1ebf8c"/><circle cx="6.4" cy="1.75" r="1.85" fill="#1ebf8c"/></g></svg>
<div style="position:absolute;left:1716.5px;top:247.60000000000002px;height:16px;line-height:16px;font-size:12px;color:#e0e0e0;white-space:nowrap;">InvertedSpine02</div>
<svg style="position:absolute;left:1695px;top:273.47px;overflow:visible" width="10" height="8" viewBox="0 0 10 8" ><path d="M1 2.0 L5 6.0 L9 2.0" fill="none" stroke="#cfcfcf" stroke-width="1.1" stroke-linecap="round" stroke-linejoin="round"/></svg>
<svg style="position:absolute;left:1712.5px;top:266.37px;overflow:visible" width="20" height="20" viewBox="-10 -10 20 20"><g transform="scale(0.95) rotate(45)"><rect x="-5.5" y="-1.15" width="11" height="2.3" fill="#1ebf8c"/><circle cx="-6.4" cy="-1.75" r="1.85" fill="#1ebf8c"/><circle cx="-6.4" cy="1.75" r="1.85" fill="#1ebf8c"/><circle cx="6.4" cy="-1.75" r="1.85" fill="#1ebf8c"/><circle cx="6.4" cy="1.75" r="1.85" fill="#1ebf8c"/></g></svg>
<div style="position:absolute;left:1738.5px;top:269.47px;height:16px;line-height:16px;font-size:12px;color:#e0e0e0;white-space:nowrap;">InvertedSpine01</div>
<svg style="position:absolute;left:1734.5px;top:288.24px;overflow:visible" width="20" height="20" viewBox="-10 -10 20 20"><g transform="scale(0.95) rotate(45)"><rect x="-5.5" y="-1.15" width="11" height="2.3" fill="#1ebf8c"/><circle cx="-6.4" cy="-1.75" r="1.85" fill="#1ebf8c"/><circle cx="-6.4" cy="1.75" r="1.85" fill="#1ebf8c"/><circle cx="6.4" cy="-1.75" r="1.85" fill="#1ebf8c"/><circle cx="6.4" cy="1.75" r="1.85" fill="#1ebf8c"/></g></svg>
<div style="position:absolute;left:1760.5px;top:291.34000000000003px;height:16px;line-height:16px;font-size:12px;color:#e0e0e0;white-space:nowrap;">CopySpine_01</div>
<svg style="position:absolute;left:1712.5px;top:310.11px;overflow:visible" width="20" height="20" viewBox="-10 -10 20 20"><g transform="scale(0.95) rotate(45)"><rect x="-5.5" y="-1.15" width="11" height="2.3" fill="#1ebf8c"/><circle cx="-6.4" cy="-1.75" r="1.85" fill="#1ebf8c"/><circle cx="-6.4" cy="1.75" r="1.85" fill="#1ebf8c"/><circle cx="6.4" cy="-1.75" r="1.85" fill="#1ebf8c"/><circle cx="6.4" cy="1.75" r="1.85" fill="#1ebf8c"/></g></svg>
<div style="position:absolute;left:1738.5px;top:313.21000000000004px;height:16px;line-height:16px;font-size:12px;color:#e0e0e0;white-space:nowrap;">CopySpine02</div>
<svg style="position:absolute;left:1690.5px;top:331.98px;overflow:visible" width="20" height="20" viewBox="-10 -10 20 20"><g transform="scale(0.95) rotate(45)"><rect x="-5.5" y="-1.15" width="11" height="2.3" fill="#1ebf8c"/><circle cx="-6.4" cy="-1.75" r="1.85" fill="#1ebf8c"/><circle cx="-6.4" cy="1.75" r="1.85" fill="#1ebf8c"/><circle cx="6.4" cy="-1.75" r="1.85" fill="#1ebf8c"/><circle cx="6.4" cy="1.75" r="1.85" fill="#1ebf8c"/></g></svg>
<div style="position:absolute;left:1716.5px;top:335.08000000000004px;height:16px;line-height:16px;font-size:12px;color:#e0e0e0;white-space:nowrap;">CopySpine03</div>
<svg style="position:absolute;left:1629px;top:360.95000000000005px;overflow:visible" width="10" height="8" viewBox="0 0 10 8" ><path d="M1 2.0 L5 6.0 L9 2.0" fill="none" stroke="#cfcfcf" stroke-width="1.1" stroke-linecap="round" stroke-linejoin="round"/></svg>
<svg style="position:absolute;left:1647.5px;top:355.65000000000003px;overflow:visible" width="18" height="18" viewBox="0 0 18 18" ><circle cx="9" cy="3.5" r="1.6" fill="none" stroke="#1ebf8c" stroke-width="1.1"/><circle cx="2.5" cy="4.5" r="1.3" fill="none" stroke="#1ebf8c" stroke-width="1"/><path d="M3.8 5 L9 6 L15.5 5 M9 6 V10.5 L5 16 M9 10.5 L13 16" fill="none" stroke="#1ebf8c" stroke-width="1.4"/></svg>
<div style="position:absolute;left:1672.8px;top:356.95000000000005px;height:16px;line-height:16px;font-size:12px;color:#e0e0e0;white-space:nowrap;">Armature</div>
<svg style="position:absolute;left:1652px;top:381.52000000000004px;overflow:visible" width="8" height="10" viewBox="0 0 8 10" ><path d="M2.0 1 L6.0 5 L2.0 9" fill="none" stroke="#cfcfcf" stroke-width="1.1" stroke-linecap="round" stroke-linejoin="round"/></svg>
<svg style="position:absolute;left:1669.5px;top:377.52000000000004px;overflow:visible" width="18" height="18" viewBox="0 0 18 18" ><g transform="translate(9,9) rotate(45)"><rect x="-6" y="-1.4" width="12" height="2.8" fill="#e0e0e0"/><circle cx="-6.5" cy="-1.8" r="2" fill="#e0e0e0"/><circle cx="-6.5" cy="1.8" r="2" fill="#e0e0e0"/><circle cx="6.5" cy="-1.8" r="2" fill="#e0e0e0"/><circle cx="6.5" cy="1.8" r="2" fill="#e0e0e0"/></g><g transform="translate(9,9) rotate(-45)"><rect x="-6" y="-1.4" width="12" height="2.8" fill="none" stroke="#e0e0e0" stroke-width="0.9"/><circle cx="-6.5" cy="0" r="2.4" fill="none" stroke="#e0e0e0" stroke-width="0.9"/><circle cx="6.5" cy="0" r="2.4" fill="none" stroke="#e0e0e0" stroke-width="0.9"/></g></svg>
<div style="position:absolute;left:1694.5px;top:378.82000000000005px;height:16px;line-height:16px;font-size:12px;color:#e0e0e0;white-space:nowrap;">Bone Collections</div>
<div style="position:absolute;left:1806.5px;top:376.02000000000004px;width:21px;height:21px;background:#274538;border-radius:5px;border:1px solid #3a6453"></div>
<svg style="position:absolute;left:1808px;top:377.52000000000004px;overflow:visible" width="18" height="18" viewBox="0 0 18 18" ><g transform="translate(9,9) rotate(45)"><rect x="-6" y="-1.4" width="12" height="2.8" fill="#e0e0e0"/><circle cx="-6.5" cy="-1.8" r="2" fill="#e0e0e0"/><circle cx="-6.5" cy="1.8" r="2" fill="#e0e0e0"/><circle cx="6.5" cy="-1.8" r="2" fill="#e0e0e0"/><circle cx="6.5" cy="1.8" r="2" fill="#e0e0e0"/></g><g transform="translate(9,9) rotate(-45)"><rect x="-6" y="-1.4" width="12" height="2.8" fill="none" stroke="#e0e0e0" stroke-width="0.9"/><circle cx="-6.5" cy="0" r="2.4" fill="none" stroke="#e0e0e0" stroke-width="0.9"/><circle cx="6.5" cy="0" r="2.4" fill="none" stroke="#e0e0e0" stroke-width="0.9"/></g></svg>
</div></div>
</body></html>
